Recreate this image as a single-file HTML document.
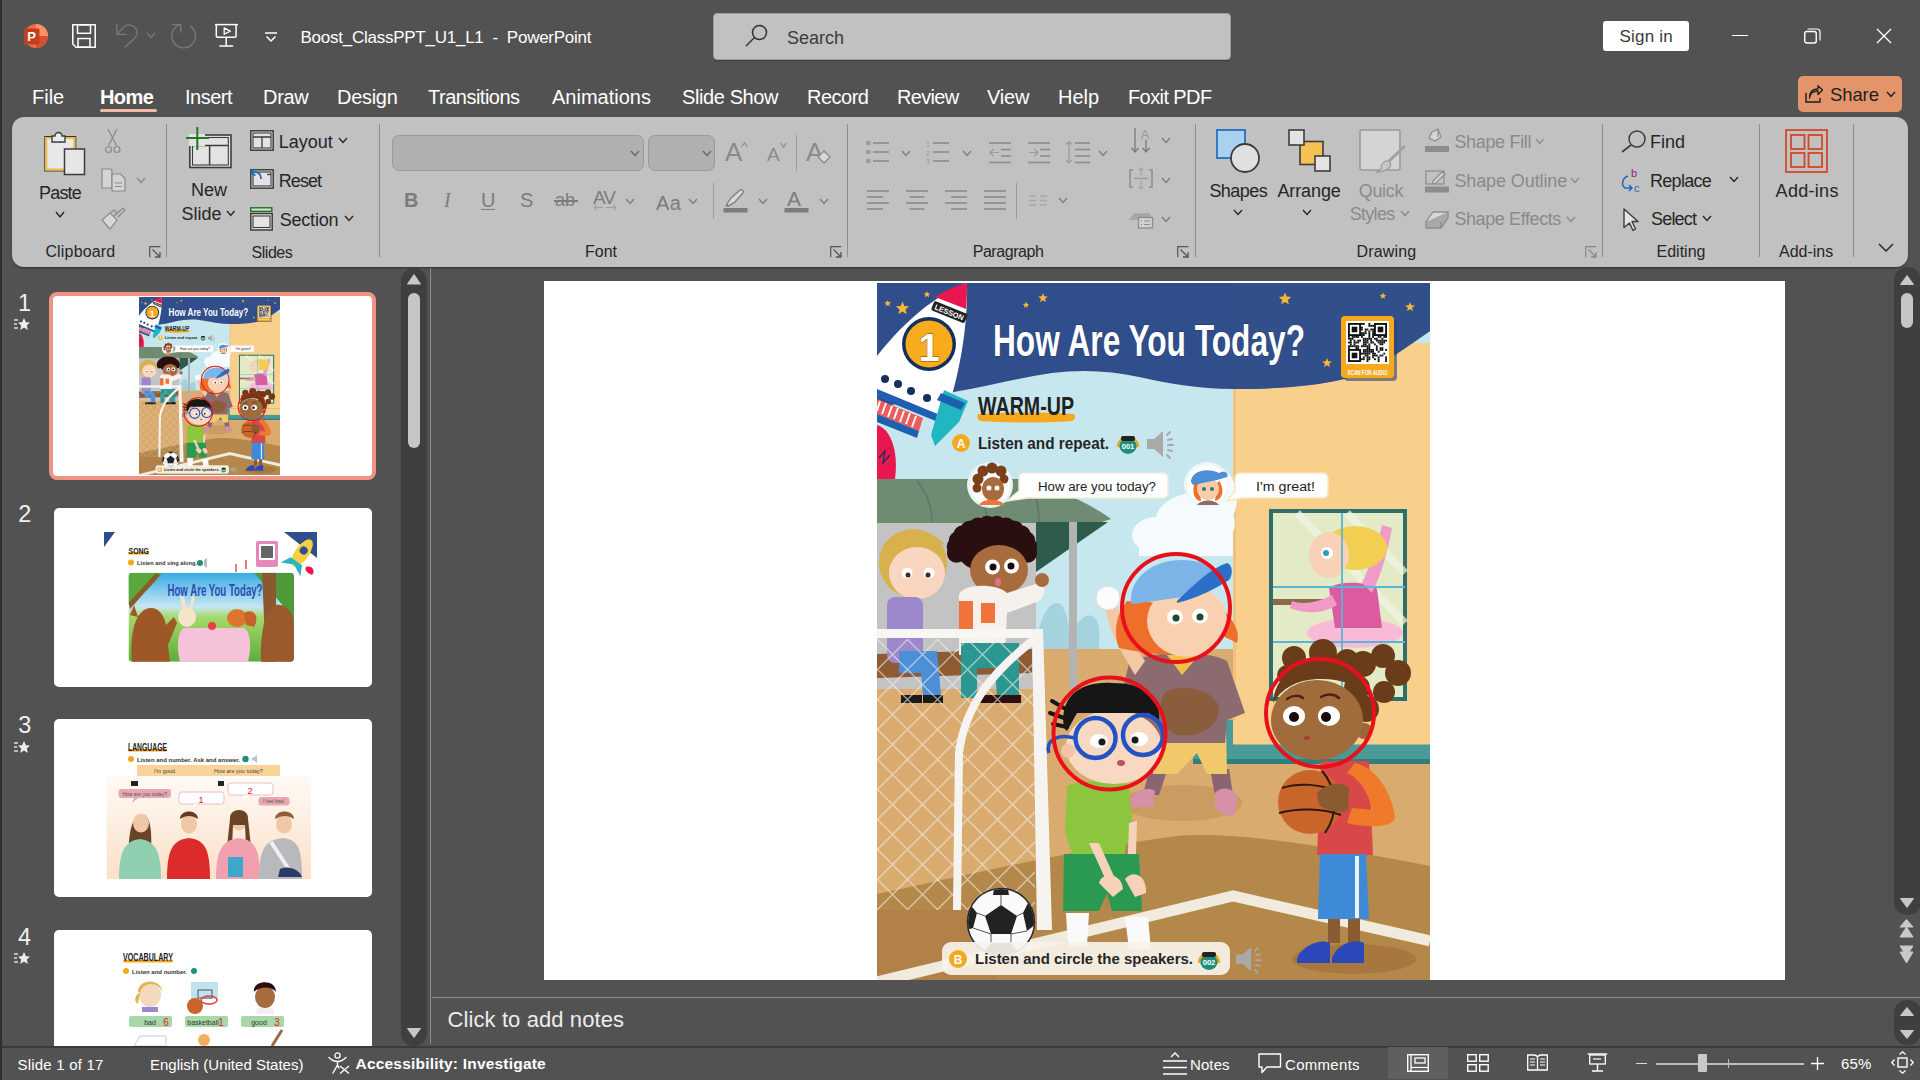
<!DOCTYPE html>
<html><head><meta charset="utf-8">
<style>
*{box-sizing:border-box;margin:0;padding:0}
html,body{width:1920px;height:1080px;overflow:hidden;background:#525252;font-family:"Liberation Sans",sans-serif}
.a{position:absolute;white-space:pre;line-height:1}
svg{position:absolute;overflow:visible}
</style></head><body>
<!-- chrome -->
<div class="a" style="left:0px;top:0px;width:2px;height:1080px;background:#2e2e2e;"></div>
<svg style="left:24px;top:24px;" width="24" height="24" viewBox="0 0 24 24"><circle cx="12" cy="12" r="12" fill="#ed6c47"/>
<path d="M12 0 A12 12 0 0 1 24 12 L12 12Z" fill="#ff8f6b"/>
<path d="M12 12 L24 12 A12 12 0 0 1 12 24Z" fill="#d35230"/>
<rect x="0" y="4.5" width="15.5" height="16" rx="1.5" fill="#c43e1c"/>
<text x="3.2" y="17" font-family="Liberation Sans" font-weight="bold" font-size="13" fill="#fff">P</text></svg>
<svg style="left:72px;top:24px;" width="24" height="24" viewBox="0 0 24 24"><path d="M0.8 0.8 H23.2 V23.2 H4 L0.8 20 Z" fill="none" stroke="#fff" stroke-width="1.5"/>
<rect x="5.5" y="0.8" width="13" height="8.5" fill="none" stroke="#fff" stroke-width="1.5"/>
<rect x="6" y="14.5" width="12" height="8.7" fill="none" stroke="#fff" stroke-width="1.5"/></svg>
<svg style="left:116px;top:24px;" width="24" height="24" viewBox="0 0 24 24"><path d="M0.8 0 V10.3 H10.7" fill="none" stroke="#7a7a7a" stroke-width="1.3"/>
<path d="M1.5 9.6 L8 3 C12 -1 21 1 21 9 C21 11.5 20 13 18 15 L8.7 23.2" fill="none" stroke="#7a7a7a" stroke-width="1.3"/></svg>
<svg style="left:146px;top:32px;" width="10" height="6.5" viewBox="0 0 10 6.5"><path d="M1 1 L5.0 5.5 L9 1" fill="none" stroke="#7a7a7a" stroke-width="1.2"/></svg>
<svg style="left:171px;top:23px;" width="26" height="26" viewBox="0 0 26 26"><path d="M1.3 1.6 H9.7 V9.8" fill="none" stroke="#7a7a7a" stroke-width="1.3"/>
<path d="M10.1 1.3 A11.9 11.9 0 1 0 19.1 2.9" fill="none" stroke="#7a7a7a" stroke-width="1.3"/></svg>
<svg style="left:214px;top:23px;" width="26" height="24" viewBox="0 0 26 24"><path d="M1 1.6 H24" stroke="#fff" stroke-width="1.5"/>
<path d="M2.3 1.6 V13 Q2.3 14.3 3.6 14.3 H20.8 Q22.1 14.3 22.1 13 V1.6" fill="none" stroke="#fff" stroke-width="1.5"/>
<path d="M10.2 4.9 L16.2 8.1 L10.2 11.3Z" fill="none" stroke="#fff" stroke-width="1.3" stroke-linejoin="round"/>
<path d="M12.2 14.3 V22.7 M5.3 22.9 H19.2" fill="none" stroke="#fff" stroke-width="1.5"/></svg>
<svg style="left:264px;top:32px;" width="14" height="11" viewBox="0 0 14 11"><path d="M1 1 H13" stroke="#fff" stroke-width="1.5"/><path d="M2.5 4.5 L7 9 L11.5 4.5" fill="none" stroke="#fff" stroke-width="1.5"/></svg>
<div class="a" style="left:300.5px;top:28.6px;font-size:17px;color:#ffffff;letter-spacing:-0.25px;">Boost_ClassPPT_U1_L1  -  PowerPoint</div>
<div class="a" style="left:713px;top:13px;width:518px;height:47px;background:#c1c1c1;border:1px solid #9c9c9c;border-radius:4px;box-shadow:0 1px 1px rgba(0,0,0,.25)"></div>
<svg style="left:745px;top:24px;" width="23" height="24" viewBox="0 0 23 24"><circle cx="14.5" cy="8.5" r="7" fill="none" stroke="#333" stroke-width="1.5"/>
<path d="M9.5 13.5 L1 22" stroke="#333" stroke-width="1.5"/></svg>
<div class="a" style="left:787px;top:29.2px;font-size:18px;color:#3b3b3b;">Search</div>
<div class="a" style="left:1603px;top:21px;width:86px;height:30px;background:#fff;border-radius:3px"></div>
<div class="a" style="left:1619.5px;top:28.3px;font-size:17px;color:#3a3a3a;letter-spacing:0.2px;">Sign in</div>
<div class="a" style="left:1732px;top:35px;width:16px;height:1.3px;background:#fff;"></div>
<svg style="left:1804px;top:28px;" width="17" height="16" viewBox="0 0 17 16"><rect x="0.75" y="3.5" width="11.5" height="11.5" rx="2" fill="none" stroke="#fff" stroke-width="1.4"/>
<path d="M3.5 1 H13 A3 3 0 0 1 16 4 V12.5" fill="none" stroke="#fff" stroke-width="1.2"/></svg>
<svg style="left:1876px;top:28px;" width="16" height="16" viewBox="0 0 16 16"><path d="M1 1 L15 15 M15 1 L1 15" stroke="#fff" stroke-width="1.4"/></svg>
<div class="a" style="left:32px;top:86.7px;font-size:20px;color:#ffffff;">File</div>
<div class="a" style="left:100px;top:86.7px;font-size:20px;color:#ffffff;font-weight:bold;letter-spacing:-0.6px;">Home</div>
<div class="a" style="left:185px;top:86.7px;font-size:20px;color:#ffffff;letter-spacing:-0.5px;">Insert</div>
<div class="a" style="left:263px;top:86.7px;font-size:20px;color:#ffffff;letter-spacing:-0.3px;">Draw</div>
<div class="a" style="left:337px;top:86.7px;font-size:20px;color:#ffffff;letter-spacing:-0.3px;">Design</div>
<div class="a" style="left:428px;top:86.7px;font-size:20px;color:#ffffff;letter-spacing:-0.5px;">Transitions</div>
<div class="a" style="left:552px;top:86.7px;font-size:20px;color:#ffffff;">Animations</div>
<div class="a" style="left:682px;top:86.7px;font-size:20px;color:#ffffff;letter-spacing:-0.4px;">Slide Show</div>
<div class="a" style="left:807px;top:86.7px;font-size:20px;color:#ffffff;letter-spacing:-0.5px;">Record</div>
<div class="a" style="left:897px;top:86.7px;font-size:20px;color:#ffffff;letter-spacing:-0.7px;">Review</div>
<div class="a" style="left:987px;top:86.7px;font-size:20px;color:#ffffff;letter-spacing:-0.2px;">View</div>
<div class="a" style="left:1058px;top:86.7px;font-size:20px;color:#ffffff;">Help</div>
<div class="a" style="left:1128px;top:86.7px;font-size:20px;color:#ffffff;letter-spacing:-0.6px;">Foxit PDF</div>
<div class="a" style="left:100px;top:108.5px;width:57px;height:3.5px;background:#f2b8a8;border-radius:2px"></div>
<div class="a" style="left:1798px;top:76px;width:104px;height:36px;background:#e3946a;border-radius:5px"></div>
<svg style="left:1805px;top:85px;" width="18" height="18" viewBox="0 0 18 18"><path d="M1 8 V17 H15 V13" fill="none" stroke="#1f1f1f" stroke-width="1.4"/>
<path d="M4.5 13 C5 8 8 6 13 6 V9.5 L17.5 5 L13 0.8 V4 C7 4 4 8 4.5 13Z" fill="none" stroke="#1f1f1f" stroke-width="1.3" stroke-linejoin="round"/></svg>
<div class="a" style="left:1830px;top:86.3px;font-size:18.5px;color:#1f1f1f;letter-spacing:-0.1px;">Share</div>
<svg style="left:1886px;top:91px;" width="10" height="6.5" viewBox="0 0 10 6.5"><path d="M1 1 L5.0 5.5 L9 1" fill="none" stroke="#1f1f1f" stroke-width="1.4"/></svg>
<!-- ribbon -->
<div class="a" style="left:12px;top:117px;width:1896px;height:150px;background:#c1c1c1;border-radius:12px;box-shadow:0 1px 2px rgba(0,0,0,.4)"></div>
<svg style="left:44px;top:130px;" width="42" height="46" viewBox="0 0 42 46"><rect x="0.8" y="6.5" width="31" height="34.5" fill="#e8e8e8" stroke="#333" stroke-width="1"/><rect x="2.3" y="8" width="28" height="31.5" fill="#e8e8e8" stroke="#f0bd45" stroke-width="2"/>
<path d="M8 12 V6 H11 A3.5 3.5 0 0 1 18 6 H21 V12 Z" fill="#ececec" stroke="#3c3c3c" stroke-width="1.4"/>
<rect x="20.5" y="19" width="20" height="25.5" fill="#e6e6e6" stroke="#3c3c3c" stroke-width="1.5"/></svg>
<div class="a" style="left:39px;top:183.7px;font-size:18px;color:#262626;letter-spacing:-0.8px;">Paste</div>
<svg style="left:55px;top:211px;" width="10" height="7" viewBox="0 0 10 7"><path d="M1 1 L5.0 6 L9 1" fill="none" stroke="#262626" stroke-width="1.4"/></svg>
<svg style="left:104px;top:129px;" width="18" height="25" viewBox="0 0 18 25"><path d="M4 0 L12.5 16.5 M13 0 L4.5 16.5" stroke="#8a8a8a" stroke-width="1.2" fill="none"/>
<circle cx="4.5" cy="20.5" r="3" fill="none" stroke="#8a8a8a" stroke-width="1.2"/><circle cx="13" cy="20.5" r="3" fill="none" stroke="#8a8a8a" stroke-width="1.2"/></svg>
<svg style="left:101px;top:168px;" width="25" height="24" viewBox="0 0 25 24"><path d="M1 1 H9.5 L11 2.5 V20 H1 Z" fill="#d4d4d4" stroke="#8a8a8a" stroke-width="1.2"/>
<path d="M11 6 H19.5 L24 10.5 V23 H11 Z" fill="#d4d4d4" stroke="#8a8a8a" stroke-width="1.2"/>
<path d="M14 15 H21 M14 18.5 H21" stroke="#8a8a8a" stroke-width="1.2"/></svg>
<svg style="left:136px;top:177px;" width="10" height="6.5" viewBox="0 0 10 6.5"><path d="M1 1 L5.0 5.5 L9 1" fill="none" stroke="#8a8a8a" stroke-width="1.3"/></svg>
<svg style="left:101px;top:207px;" width="25" height="23" viewBox="0 0 25 23"><path d="M1 13 L9 6 L16 13 L9 22 Z" fill="#d8d8d8" stroke="#8a8a8a" stroke-width="1.2"/>
<path d="M9 6 L13 3 L16 6 L13 9" fill="none" stroke="#8a8a8a" stroke-width="1.2"/>
<path d="M14 8 L22 1 L24 3 L17 10" fill="none" stroke="#8a8a8a" stroke-width="1.2"/></svg>
<div class="a" style="left:45.4px;top:244.4px;font-size:16px;color:#262626;letter-spacing:0.17px;">Clipboard</div>
<svg style="left:149px;top:246px;" width="12" height="12" viewBox="0 0 12 12"><path d="M0.7 11.3 V0.7 H11.3" fill="none" stroke="#555" stroke-width="1.2"/><path d="M3.5 3.5 L11 11 M6 11 H11 V6" fill="none" stroke="#555" stroke-width="1.3"/></svg>
<div class="a" style="left:166px;top:124px;width:1px;height:133px;background:#8e8e8e;"></div>
<svg style="left:185px;top:127px;" width="48" height="43" viewBox="0 0 48 43"><rect x="4.8" y="8" width="41.2" height="32.5" fill="#e3e3e3" stroke="#3c3c3c" stroke-width="1.6"/>
<rect x="7.5" y="10.5" width="35.8" height="27.5" fill="none" stroke="#3c3c3c" stroke-width="1.1"/>
<path d="M7.5 18.5 H43 M24.6 18.5 V38" stroke="#3c3c3c" stroke-width="1.5"/>
<rect x="4" y="7" width="16" height="12" fill="#e3e3e3"/>
<path d="M12.3 0 V23 M1 11 H24" stroke="#1e7b1e" stroke-width="2"/></svg>
<div class="a" style="left:191px;top:181.4px;font-size:18px;color:#262626;">New</div>
<div class="a" style="left:181.5px;top:205.1px;font-size:18px;color:#262626;">Slide</div>
<svg style="left:226px;top:210px;" width="9.5" height="6.5" viewBox="0 0 9.5 6.5"><path d="M1 1 L4.75 5.5 L8.5 1" fill="none" stroke="#262626" stroke-width="1.4"/></svg>
<svg style="left:250px;top:130px;" width="24" height="21" viewBox="0 0 24 21"><rect x="0.8" y="0.8" width="22.4" height="19.4" fill="#e3e3e3" stroke="#3c3c3c" stroke-width="1.5"/>
<rect x="3" y="3" width="18" height="15" fill="none" stroke="#3c3c3c" stroke-width="1.1"/><path d="M3 7 H21 M12 7 V18" stroke="#3c3c3c" stroke-width="1.3"/></svg>
<div class="a" style="left:278.7px;top:132.5px;font-size:18px;color:#262626;">Layout</div>
<svg style="left:338px;top:137px;" width="10" height="6.5" viewBox="0 0 10 6.5"><path d="M1 1 L5.0 5.5 L9 1" fill="none" stroke="#262626" stroke-width="1.4"/></svg>
<svg style="left:250px;top:168px;" width="24" height="21" viewBox="0 0 24 21"><rect x="0.8" y="1.8" width="22.4" height="18.4" fill="#e3e3e3" stroke="#3c3c3c" stroke-width="1.5"/>
<rect x="3" y="4" width="18" height="14" fill="none" stroke="#3c3c3c" stroke-width="1.1"/><path d="M17 6.5 H21" stroke="#3c3c3c" stroke-width="1.3"/>
<path d="M1 5 L4.5 1 M1 5 L5.5 7.5 M1.5 5 C7 3 11 5 11 11" fill="none" stroke="#1f66c0" stroke-width="1.6"/></svg>
<div class="a" style="left:278.7px;top:171.7px;font-size:18px;color:#262626;letter-spacing:-0.9px;">Reset</div>
<svg style="left:250px;top:207px;" width="23" height="24" viewBox="0 0 23 24"><rect x="0.8" y="0.8" width="21" height="3.5" fill="#e3e3e3" stroke="#1e7b1e" stroke-width="1.5"/>
<rect x="0.8" y="6.5" width="21.4" height="16.5" fill="#e3e3e3" stroke="#3c3c3c" stroke-width="1.5"/>
<rect x="3" y="9" width="17" height="11.5" fill="none" stroke="#3c3c3c" stroke-width="1.1"/></svg>
<div class="a" style="left:279.7px;top:210.5px;font-size:18px;color:#262626;letter-spacing:-0.2px;">Section</div>
<svg style="left:344px;top:215px;" width="10" height="6.5" viewBox="0 0 10 6.5"><path d="M1 1 L5.0 5.5 L9 1" fill="none" stroke="#262626" stroke-width="1.4"/></svg>
<div class="a" style="left:251.6px;top:245.2px;font-size:16px;color:#262626;letter-spacing:-0.5px;">Slides</div>
<div class="a" style="left:379px;top:124px;width:1px;height:133px;background:#8e8e8e;"></div>
<div class="a" style="left:392px;top:135px;width:252px;height:36px;background:#b0b0b0;border:1px solid #9a9a9a;border-radius:7px"></div>
<svg style="left:630px;top:150px;" width="10" height="6.5" viewBox="0 0 10 6.5"><path d="M1 1 L5.0 5.5 L9 1" fill="none" stroke="#666" stroke-width="1.3"/></svg>
<div class="a" style="left:647.5px;top:135px;width:67px;height:36px;background:#b0b0b0;border:1px solid #9a9a9a;border-radius:7px"></div>
<svg style="left:701.5px;top:150px;" width="10" height="6.5" viewBox="0 0 10 6.5"><path d="M1 1 L5.0 5.5 L9 1" fill="none" stroke="#666" stroke-width="1.3"/></svg>
<svg style="left:725px;top:140px;" width="24" height="22" viewBox="0 0 24 22"><text x="0" y="21" font-family="Liberation Sans" font-size="26" fill="#8a8a8a">A</text><path d="M16.5 7 L19.5 3 L22.5 7" fill="none" stroke="#8a8a8a" stroke-width="1.1"/></svg>
<svg style="left:767px;top:140px;" width="22" height="22" viewBox="0 0 22 22"><text x="0" y="21" font-family="Liberation Sans" font-size="19" fill="#8a8a8a">A</text><path d="M13.5 3 L16.5 7 L19.5 3" fill="none" stroke="#8a8a8a" stroke-width="1.1"/></svg>
<div class="a" style="left:796px;top:135px;width:1px;height:36px;background:#9a9a9a;"></div>
<svg style="left:806px;top:140px;" width="26" height="25" viewBox="0 0 26 25"><text x="0" y="21" font-family="Liberation Sans" font-size="26" fill="#8a8a8a">A</text><path d="M12 17 L18 11 L24 17 L18 23 Z" fill="#d8d8d8" stroke="#8a8a8a" stroke-width="1.3"/></svg>
<div class="a" style="left:404px;top:189.5px;font-size:20px;color:#7c7c7c;font-weight:bold;">B</div>
<div class="a" style="left:444px;top:189.5px;font-size:20px;color:#7c7c7c;font-family:Liberation Serif;font-style:italic">I</div>
<div class="a" style="left:481px;top:189.5px;font-size:20px;color:#7c7c7c;">U</div>
<div class="a" style="left:481px;top:208.5px;width:14px;height:1.5px;background:#7c7c7c;"></div>
<div class="a" style="left:520px;top:189.5px;font-size:20px;color:#7c7c7c;">S</div>
<div class="a" style="left:555px;top:191.2px;font-size:18px;color:#7c7c7c;">ab</div>
<div class="a" style="left:554px;top:200px;width:24px;height:1.5px;background:#7c7c7c;"></div>
<div class="a" style="left:593px;top:187.8px;font-size:19px;color:#7c7c7c;letter-spacing:-1px;">AV</div>
<svg style="left:593px;top:204px;" width="24" height="7" viewBox="0 0 24 7"><path d="M1 3.5 H10 M1 3.5 L3.5 1 M1 3.5 L3.5 6 M13 3.5 H23 M23 3.5 L20.5 1 M23 3.5 L20.5 6" fill="none" stroke="#a0a0a0" stroke-width="1.1"/></svg>
<svg style="left:625px;top:198px;" width="10" height="6.5" viewBox="0 0 10 6.5"><path d="M1 1 L5.0 5.5 L9 1" fill="none" stroke="#7c7c7c" stroke-width="1.3"/></svg>
<div class="a" style="left:656px;top:192.5px;font-size:20px;color:#7c7c7c;letter-spacing:0.5px;">Aa</div>
<svg style="left:688px;top:198px;" width="10" height="6.5" viewBox="0 0 10 6.5"><path d="M1 1 L5.0 5.5 L9 1" fill="none" stroke="#7c7c7c" stroke-width="1.3"/></svg>
<div class="a" style="left:713px;top:183px;width:1px;height:36px;background:#9a9a9a;"></div>
<svg style="left:723px;top:189px;" width="25" height="24" viewBox="0 0 25 24"><path d="M4 15 L8 9 L17 1 C19 0 21 2 20 4 L12 13 L5 17Z" fill="#d8d8d8" stroke="#7c7c7c" stroke-width="1.3"/>
<path d="M2 16.5 L5 15 L4 18 Z" fill="#7c7c7c"/><rect x="0.5" y="19" width="24" height="4.5" fill="#7c7c7c"/></svg>
<svg style="left:758px;top:198px;" width="10" height="6.5" viewBox="0 0 10 6.5"><path d="M1 1 L5.0 5.5 L9 1" fill="none" stroke="#7c7c7c" stroke-width="1.3"/></svg>
<svg style="left:784px;top:189px;" width="25" height="24" viewBox="0 0 25 24"><text x="3" y="17" font-family="Liberation Sans" font-size="21" fill="#7c7c7c">A</text><rect x="0.5" y="19" width="24" height="4.5" fill="#7c7c7c"/></svg>
<svg style="left:819px;top:198px;" width="10" height="6.5" viewBox="0 0 10 6.5"><path d="M1 1 L5.0 5.5 L9 1" fill="none" stroke="#7c7c7c" stroke-width="1.3"/></svg>
<div class="a" style="left:585px;top:244.4px;font-size:16px;color:#262626;">Font</div>
<svg style="left:830px;top:246px;" width="12" height="12" viewBox="0 0 12 12"><path d="M0.7 11.3 V0.7 H11.3" fill="none" stroke="#555" stroke-width="1.2"/><path d="M3.5 3.5 L11 11 M6 11 H11 V6" fill="none" stroke="#555" stroke-width="1.3"/></svg>
<div class="a" style="left:847px;top:124px;width:1px;height:133px;background:#8e8e8e;"></div>
<svg style="left:866px;top:141px;" width="24" height="22" viewBox="0 0 24 22"><rect x="0" y="0" width="4.5" height="4" fill="#9a9a9a"/><rect x="0" y="9" width="4.5" height="4" fill="#9a9a9a"/><rect x="0" y="18" width="4.5" height="4" fill="#9a9a9a"/><path d="M7 2 H23" stroke="#8c8c8c" stroke-width="1.6"/><path d="M7 11 H23" stroke="#8c8c8c" stroke-width="1.6"/><path d="M7 20 H23" stroke="#8c8c8c" stroke-width="1.6"/></svg>
<svg style="left:901px;top:150px;" width="10" height="6.5" viewBox="0 0 10 6.5"><path d="M1 1 L5.0 5.5 L9 1" fill="none" stroke="#7c7c7c" stroke-width="1.3"/></svg>
<svg style="left:926px;top:141px;" width="24" height="23" viewBox="0 0 24 23"><text x="0" y="6" font-family="Liberation Sans" font-size="7" fill="#9a9a9a">1</text><text x="0" y="15" font-family="Liberation Sans" font-size="7" fill="#9a9a9a">2</text><text x="0" y="23" font-family="Liberation Sans" font-size="7" fill="#9a9a9a">3</text><path d="M7 2 H23" stroke="#8c8c8c" stroke-width="1.6"/><path d="M7 11 H23" stroke="#8c8c8c" stroke-width="1.6"/><path d="M7 20 H23" stroke="#8c8c8c" stroke-width="1.6"/></svg>
<svg style="left:962px;top:150px;" width="10" height="6.5" viewBox="0 0 10 6.5"><path d="M1 1 L5.0 5.5 L9 1" fill="none" stroke="#7c7c7c" stroke-width="1.3"/></svg>
<svg style="left:989px;top:142px;" width="23" height="21" viewBox="0 0 23 21"><path d="M0 1.0 H22" stroke="#8c8c8c" stroke-width="1.6"/><path d="M12 7.5 H22" stroke="#8c8c8c" stroke-width="1.6"/><path d="M12 14.0 H22" stroke="#8c8c8c" stroke-width="1.6"/><path d="M0 20.5 H22" stroke="#8c8c8c" stroke-width="1.6"/><path d="M10 10.5 H1 M4.5 7 L1 10.5 L4.5 14" fill="none" stroke="#9a9a9a" stroke-width="1.2"/></svg>
<svg style="left:1028px;top:142px;" width="23" height="21" viewBox="0 0 23 21"><path d="M0 1.0 H22" stroke="#8c8c8c" stroke-width="1.6"/><path d="M12 7.5 H22" stroke="#8c8c8c" stroke-width="1.6"/><path d="M12 14.0 H22" stroke="#8c8c8c" stroke-width="1.6"/><path d="M0 20.5 H22" stroke="#8c8c8c" stroke-width="1.6"/><path d="M1 10.5 H10 M6.5 7 L10 10.5 L6.5 14" fill="none" stroke="#9a9a9a" stroke-width="1.2"/></svg>
<svg style="left:1065px;top:141px;" width="26" height="23" viewBox="0 0 26 23"><path d="M10 2.0 H25" stroke="#8c8c8c" stroke-width="1.6"/><path d="M10 8.5 H25" stroke="#8c8c8c" stroke-width="1.6"/><path d="M10 15.0 H25" stroke="#8c8c8c" stroke-width="1.6"/><path d="M10 21.5 H25" stroke="#8c8c8c" stroke-width="1.6"/><path d="M4 0.5 V22 M1 3.5 L4 0.5 L7 3.5 M1 19 L4 22 L7 19" fill="none" stroke="#9a9a9a" stroke-width="1.2"/></svg>
<svg style="left:1098px;top:150px;" width="10" height="6.5" viewBox="0 0 10 6.5"><path d="M1 1 L5.0 5.5 L9 1" fill="none" stroke="#7c7c7c" stroke-width="1.3"/></svg>
<svg style="left:1131px;top:128px;" width="21" height="26" viewBox="0 0 21 26"><path d="M4 0 V24 M0.5 20 L4 24 L7.5 20 M15 12 V24 M11.5 20 L15 24 L18.5 20" fill="none" stroke="#7c7c7c" stroke-width="1.4"/><text x="10" y="11" font-family="Liberation Sans" font-size="12" fill="#9a9a9a">A</text></svg>
<svg style="left:1161px;top:137px;" width="10" height="6.5" viewBox="0 0 10 6.5"><path d="M1 1 L5.0 5.5 L9 1" fill="none" stroke="#7c7c7c" stroke-width="1.3"/></svg>
<svg style="left:1129px;top:167px;" width="24" height="24" viewBox="0 0 24 24"><path d="M4 3 H1 V20 H4 M20 3 H23 V20 H20" fill="none" stroke="#8c8c8c" stroke-width="1.5"/><path d="M5 11.5 H19" stroke="#9a9a9a" stroke-width="1.4"/><path d="M12 1 V9 M9.5 3.5 L12 1 L14.5 3.5 M12 14 V22 M9.5 19.5 L12 22 L14.5 19.5" fill="none" stroke="#a8a8a8" stroke-width="1.3"/></svg>
<svg style="left:1161px;top:177px;" width="10" height="6.5" viewBox="0 0 10 6.5"><path d="M1 1 L5.0 5.5 L9 1" fill="none" stroke="#7c7c7c" stroke-width="1.3"/></svg>
<svg style="left:1129px;top:209px;" width="24" height="20" viewBox="0 0 24 20"><path d="M0.5 11 L5 5 H20 L24 11" fill="#a8a8a8" stroke="#9a9a9a" stroke-width="1"/><rect x="9.5" y="8.5" width="14" height="10.5" fill="#d2d2d2" stroke="#8c8c8c" stroke-width="1.3"/><path d="M12 12 H13 M15 12 H21 M12 15.5 H13 M15 15.5 H21" stroke="#8c8c8c" stroke-width="1.2"/></svg>
<svg style="left:1161px;top:216px;" width="10" height="6.5" viewBox="0 0 10 6.5"><path d="M1 1 L5.0 5.5 L9 1" fill="none" stroke="#7c7c7c" stroke-width="1.3"/></svg>
<svg style="left:867px;top:190px;" width="23" height="21" viewBox="0 0 23 21"><path d="M0 1 H22" stroke="#8c8c8c" stroke-width="1.6"/><path d="M0 7 H16" stroke="#8c8c8c" stroke-width="1.6"/><path d="M0 13 H22" stroke="#8c8c8c" stroke-width="1.6"/><path d="M0 19 H16" stroke="#8c8c8c" stroke-width="1.6"/></svg>
<svg style="left:906px;top:190px;" width="23" height="21" viewBox="0 0 23 21"><path d="M0 1 H22" stroke="#8c8c8c" stroke-width="1.6"/><path d="M3.5 7 H18.5" stroke="#8c8c8c" stroke-width="1.6"/><path d="M0 13 H22" stroke="#8c8c8c" stroke-width="1.6"/><path d="M3.5 19 H18.5" stroke="#8c8c8c" stroke-width="1.6"/></svg>
<svg style="left:945px;top:190px;" width="23" height="21" viewBox="0 0 23 21"><path d="M0 1 H22" stroke="#8c8c8c" stroke-width="1.6"/><path d="M6 7 H22" stroke="#8c8c8c" stroke-width="1.6"/><path d="M0 13 H22" stroke="#8c8c8c" stroke-width="1.6"/><path d="M6 19 H22" stroke="#8c8c8c" stroke-width="1.6"/></svg>
<svg style="left:984px;top:190px;" width="23" height="21" viewBox="0 0 23 21"><path d="M0 1 H22" stroke="#8c8c8c" stroke-width="1.6"/><path d="M0 7 H22" stroke="#8c8c8c" stroke-width="1.6"/><path d="M0 13 H22" stroke="#8c8c8c" stroke-width="1.6"/><path d="M0 19 H22" stroke="#8c8c8c" stroke-width="1.6"/></svg>
<div class="a" style="left:1016px;top:183px;width:1px;height:36px;background:#9a9a9a;"></div>
<svg style="left:1029px;top:195px;" width="20" height="12" viewBox="0 0 20 12"><path d="M0 1 H7 M11 1 H18 M0 5.5 H7 M11 5.5 H18 M0 10 H7 M11 10 H18" stroke="#a8a8a8" stroke-width="1.5"/></svg>
<svg style="left:1058px;top:197px;" width="10" height="6.5" viewBox="0 0 10 6.5"><path d="M1 1 L5.0 5.5 L9 1" fill="none" stroke="#7c7c7c" stroke-width="1.3"/></svg>
<div class="a" style="left:972.7px;top:244.4px;font-size:16px;color:#262626;letter-spacing:-0.45px;">Paragraph</div>
<svg style="left:1177px;top:246px;" width="12" height="12" viewBox="0 0 12 12"><path d="M0.7 11.3 V0.7 H11.3" fill="none" stroke="#555" stroke-width="1.2"/><path d="M3.5 3.5 L11 11 M6 11 H11 V6" fill="none" stroke="#555" stroke-width="1.3"/></svg>
<div class="a" style="left:1194.5px;top:124px;width:1px;height:133px;background:#8e8e8e;"></div>
<svg style="left:1216px;top:129px;" width="45" height="44" viewBox="0 0 45 44"><rect x="1" y="1" width="28" height="28" fill="#a9d2f0" stroke="#2a6fc0" stroke-width="1.8"/>
<circle cx="29" cy="29" r="14" fill="#e0e0e0" stroke="#3c3c3c" stroke-width="1.8"/></svg>
<div class="a" style="left:1209.4px;top:181.6px;font-size:18px;color:#262626;letter-spacing:-0.55px;">Shapes</div>
<svg style="left:1233px;top:209px;" width="10" height="6.5" viewBox="0 0 10 6.5"><path d="M1 1 L5.0 5.5 L9 1" fill="none" stroke="#262626" stroke-width="1.4"/></svg>
<svg style="left:1288px;top:129px;" width="43" height="44" viewBox="0 0 43 44"><rect x="12" y="12.5" width="23" height="23" fill="#f4c152" stroke="#3c3c3c" stroke-width="1.6"/>
<rect x="1" y="1" width="15" height="15" fill="#e3e3e3" stroke="#3c3c3c" stroke-width="1.6"/>
<rect x="27" y="27" width="15" height="15" fill="#e3e3e3" stroke="#3c3c3c" stroke-width="1.6"/></svg>
<div class="a" style="left:1277.4px;top:181.6px;font-size:18px;color:#262626;letter-spacing:-0.1px;">Arrange</div>
<svg style="left:1302px;top:209px;" width="10" height="6.5" viewBox="0 0 10 6.5"><path d="M1 1 L5.0 5.5 L9 1" fill="none" stroke="#262626" stroke-width="1.4"/></svg>
<svg style="left:1359px;top:129px;" width="48" height="46" viewBox="0 0 48 46"><rect x="1" y="1" width="40" height="40" rx="2" fill="#d4d4d4" stroke="#9a9a9a" stroke-width="1.6"/>
<path d="M46 17 L30 32" stroke="#a0a0a0" stroke-width="3"/><path d="M22 40 C22 34 27 30 31 33 C33 37 29 43 17 43 C20 42 21 41 22 40Z" fill="#c8c8c8" stroke="#9a9a9a" stroke-width="1.2"/></svg>
<div class="a" style="left:1358.7px;top:181.6px;font-size:18px;color:#8a8a8a;letter-spacing:-0.3px;">Quick</div>
<div class="a" style="left:1349.7px;top:205.0px;font-size:18px;color:#8a8a8a;letter-spacing:-0.7px;">Styles</div>
<svg style="left:1400px;top:210px;" width="10" height="6.5" viewBox="0 0 10 6.5"><path d="M1 1 L5.0 5.5 L9 1" fill="none" stroke="#8a8a8a" stroke-width="1.3"/></svg>
<svg style="left:1425px;top:129px;" width="24" height="25" viewBox="0 0 24 25"><path d="M7 3 L13 0 L16 8 L10 12 L4 9Z" fill="#d4d4d4" stroke="#8c8c8c" stroke-width="1.2"/><path d="M13 1 V8" stroke="#8c8c8c" stroke-width="1.2"/><rect x="0" y="17" width="24" height="6" fill="#8c8c8c"/></svg>
<div class="a" style="left:1454.4px;top:132.7px;font-size:18px;color:#8a8a8a;letter-spacing:-0.33px;">Shape Fill</div>
<svg style="left:1535px;top:138px;" width="9.5" height="6.5" viewBox="0 0 9.5 6.5"><path d="M1 1 L4.75 5.5 L8.5 1" fill="none" stroke="#8a8a8a" stroke-width="1.3"/></svg>
<svg style="left:1425px;top:170px;" width="24" height="23" viewBox="0 0 24 23"><rect x="1" y="1" width="18" height="13" fill="none" stroke="#8c8c8c" stroke-width="1.2"/><path d="M8 11 L17 2 L20 4 L11 13 L7.5 13.5Z" fill="#d4d4d4" stroke="#8c8c8c" stroke-width="1.2"/><rect x="0" y="16.5" width="24" height="6" fill="#8c8c8c"/></svg>
<div class="a" style="left:1454.4px;top:171.7px;font-size:18px;color:#8a8a8a;letter-spacing:-0.1px;">Shape Outline</div>
<svg style="left:1570px;top:177px;" width="10" height="6.5" viewBox="0 0 10 6.5"><path d="M1 1 L5.0 5.5 L9 1" fill="none" stroke="#8a8a8a" stroke-width="1.3"/></svg>
<svg style="left:1425px;top:209px;" width="24" height="21" viewBox="0 0 24 21"><path d="M1 13 L8 3 H23 L16 13Z" fill="#d8d8d8" stroke="#8c8c8c" stroke-width="1.3"/><path d="M1 13 V19 H16 L23 9 V3 M16 13 V19" fill="#a8a8a8" stroke="#8c8c8c" stroke-width="1.3"/></svg>
<div class="a" style="left:1454.4px;top:210.3px;font-size:18px;color:#8a8a8a;letter-spacing:-0.4px;">Shape Effects</div>
<svg style="left:1566px;top:216px;" width="10" height="6.5" viewBox="0 0 10 6.5"><path d="M1 1 L5.0 5.5 L9 1" fill="none" stroke="#8a8a8a" stroke-width="1.3"/></svg>
<div class="a" style="left:1356.6px;top:244.4px;font-size:16px;color:#262626;letter-spacing:0.15px;">Drawing</div>
<svg style="left:1585px;top:246px;" width="12" height="12" viewBox="0 0 12 12"><path d="M0.7 11.3 V0.7 H11.3" fill="none" stroke="#888" stroke-width="1.2"/><path d="M3.5 3.5 L11 11 M6 11 H11 V6" fill="none" stroke="#888" stroke-width="1.3"/></svg>
<div class="a" style="left:1602px;top:124px;width:1px;height:133px;background:#8e8e8e;"></div>
<svg style="left:1621px;top:130px;" width="26" height="23" viewBox="0 0 26 23"><circle cx="16" cy="9" r="8" fill="none" stroke="#3c3c3c" stroke-width="1.5"/><path d="M10 15 L1 22" stroke="#3c3c3c" stroke-width="1.6"/></svg>
<div class="a" style="left:1650px;top:132.7px;font-size:18px;color:#262626;">Find</div>
<svg style="left:1620px;top:168px;" width="24" height="25" viewBox="0 0 24 25"><text x="11" y="9" font-family="Liberation Sans" font-size="11" fill="#a0107a">b</text><text x="14" y="24" font-family="Liberation Sans" font-size="11" fill="#1f66c0">c</text><path d="M8 8 C2 10 1 17 5 20 H12 M9 17 L12 20 L9 23" fill="none" stroke="#1f66c0" stroke-width="1.5"/></svg>
<div class="a" style="left:1650px;top:171.7px;font-size:18px;color:#262626;letter-spacing:-0.7px;">Replace</div>
<svg style="left:1729px;top:176px;" width="10" height="6.5" viewBox="0 0 10 6.5"><path d="M1 1 L5.0 5.5 L9 1" fill="none" stroke="#262626" stroke-width="1.4"/></svg>
<svg style="left:1623px;top:208px;" width="17" height="24" viewBox="0 0 17 24"><path d="M1 1 L15 13.5 H9 L12.5 21 L10 22.5 L6.5 15 L1 19.5Z" fill="#e3e3e3" stroke="#3c3c3c" stroke-width="1.4" stroke-linejoin="round"/></svg>
<div class="a" style="left:1651px;top:210.3px;font-size:18px;color:#262626;letter-spacing:-0.8px;">Select</div>
<svg style="left:1702px;top:215px;" width="10" height="6.5" viewBox="0 0 10 6.5"><path d="M1 1 L5.0 5.5 L9 1" fill="none" stroke="#262626" stroke-width="1.4"/></svg>
<div class="a" style="left:1656.5px;top:244.4px;font-size:16px;color:#262626;">Editing</div>
<div class="a" style="left:1758.5px;top:124px;width:1px;height:133px;background:#8e8e8e;"></div>
<svg style="left:1785px;top:129px;" width="43" height="44" viewBox="0 0 43 44"><rect x="1" y="1" width="41" height="42" fill="none" stroke="#d24726" stroke-width="1.8"/>
<rect x="6" y="6" width="13.5" height="14" fill="none" stroke="#d24726" stroke-width="1.8"/><rect x="23.5" y="6" width="13.5" height="14" fill="none" stroke="#d24726" stroke-width="1.8"/>
<rect x="6" y="24" width="13.5" height="14" fill="none" stroke="#d24726" stroke-width="1.8"/><rect x="23.5" y="24" width="13.5" height="14" fill="none" stroke="#d24726" stroke-width="1.8"/></svg>
<div class="a" style="left:1775.6px;top:181.6px;font-size:18px;color:#262626;letter-spacing:0.3px;">Add-ins</div>
<div class="a" style="left:1779px;top:244.4px;font-size:16px;color:#262626;">Add-ins</div>
<div class="a" style="left:1853px;top:124px;width:1px;height:133px;background:#8e8e8e;"></div>
<svg style="left:1878px;top:242.5px;" width="16" height="9" viewBox="0 0 16 9"><path d="M1 1 L8.0 8 L15 1" fill="none" stroke="#262626" stroke-width="1.5"/></svg>
<!-- panel -->
<div class="a" style="left:18px;top:291.8px;font-size:23.5px;color:#f0f0f0;">1</div>
<svg style="left:14px;top:318px;" width="16" height="13" viewBox="0 0 16 13"><path d="M0 2 H4 M0 6 H3 M0 10 H4" stroke="#ddd" stroke-width="1.3"/><polygon points="10,0 11.9,4.3 16,4.6 12.8,7.5 13.8,12 10,9.6 6.2,12 7.2,7.5 4,4.6 8.1,4.3" fill="#eee"/></svg>
<div class="a" style="left:18.3px;top:502.5px;font-size:23.5px;color:#f0f0f0;">2</div>
<div class="a" style="left:18.3px;top:714.0px;font-size:23.5px;color:#f0f0f0;">3</div>
<svg style="left:14px;top:741px;" width="16" height="13" viewBox="0 0 16 13"><path d="M0 2 H4 M0 6 H3 M0 10 H4" stroke="#ddd" stroke-width="1.3"/><polygon points="10,0 11.9,4.3 16,4.6 12.8,7.5 13.8,12 10,9.6 6.2,12 7.2,7.5 4,4.6 8.1,4.3" fill="#eee"/></svg>
<div class="a" style="left:18px;top:926.0px;font-size:23.5px;color:#f0f0f0;">4</div>
<svg style="left:14px;top:952px;" width="16" height="13" viewBox="0 0 16 13"><path d="M0 2 H4 M0 6 H3 M0 10 H4" stroke="#ddd" stroke-width="1.3"/><polygon points="10,0 11.9,4.3 16,4.6 12.8,7.5 13.8,12 10,9.6 6.2,12 7.2,7.5 4,4.6 8.1,4.3" fill="#eee"/></svg>
<div class="a" style="left:49px;top:292px;width:327px;height:188px;background:#fff;border:4.5px solid #ef9484;border-radius:8px"></div>
<svg style="left:138.7px;top:296.8px" width="141" height="178" viewBox="0 0 553 697" preserveAspectRatio="none"><use href="#illus"/></svg>
<div class="a" style="left:54px;top:507.5px;width:317.5px;height:179px;background:#fff;border-radius:5px"></div>
<svg style="left:54px;top:505px;" width="318" height="181" viewBox="0 0 318 181"><path d="M50 27 H61 L50 42Z" fill="#2f4e8b"/>
<path d="M230 27 H263 V53Z" fill="#2f4e8b"/>
<g transform="rotate(35 248 48)"><ellipse cx="248" cy="48" rx="7" ry="16" fill="#f5d040"/><circle cx="248" cy="45" r="4" fill="#2f4e8b"/><path d="M241 58 L236 68 L248 62 L260 68 L255 58Z" fill="#2ab5c5"/></g>
<path d="M252 62 C258 60 262 66 258 70 C254 68 250 66 252 62Z" fill="#e8174f"/>
<rect x="74" y="47" width="21" height="2.5" rx="1" fill="#f5a81c"/><text x="74.5" y="48.5" font-family="Liberation Sans" font-weight="bold" font-size="9.5" fill="#222" textLength="20.5" lengthAdjust="spacingAndGlyphs">SONG</text>
<circle cx="77" cy="57.5" r="3" fill="#f5a81c"/><text x="83" y="60" font-family="Liberation Sans" font-weight="bold" font-size="6" fill="#333" textLength="60" lengthAdjust="spacingAndGlyphs">Listen and sing along.</text>
<circle cx="146" cy="58" r="3" fill="#1f8f7c"/><path d="M150 55 L153 53 V63 L150 61Z" fill="#bbb"/>
<rect x="202" y="36" width="22" height="26" rx="2" fill="#e58ab8"/><rect x="205" y="39" width="16" height="16" fill="#fff"/><rect x="207" y="41" width="12" height="12" fill="#333" opacity=".75"/>
<path d="M182 59 V67 M192 55 V64" stroke="#e04a4a" stroke-width="1.5"/>
<defs><linearGradient id="sk2" x1="0" y1="0" x2="0" y2="1"><stop offset="0" stop-color="#36abe6"/><stop offset=".38" stop-color="#c6e6f4"/><stop offset=".5" stop-color="#a6d86a"/><stop offset="1" stop-color="#5cae3c"/></linearGradient>
<clipPath id="c2"><rect x="74.5" y="67.7" width="165.5" height="89" rx="4"/></clipPath></defs>
<g clip-path="url(#c2)">
<rect x="74.5" y="67.7" width="165.5" height="89" fill="url(#sk2)"/>
<path d="M74.5 67.7 H108 C100 80 88 90 74.5 98Z" fill="#5aa83a"/><path d="M74.5 98 L102 68 L106 70 L76 104Z" fill="#8a5a2a"/>
<path d="M200 67.7 H240 V120 C232 100 215 85 200 67.7Z" fill="#4e9a3a"/><path d="M208 67.7 H222 V157 H212Z" fill="#8a5a2e"/>
<path d="M78 157 C76 130 80 110 92 104 C102 100 110 108 112 120 L120 112 L123 118 L114 140 L116 157Z" fill="#9e5828"/><path d="M76 110 L80 100 L84 112Z" fill="#9e5828"/>
<path d="M207 157 C206 130 210 105 222 100 C232 98 240 108 240 120 V157Z" fill="#9a5a2c"/>
<path d="M126 157 C122 140 124 126 130 123 H190 C196 126 198 140 194 157Z" fill="#f6c2da"/>
<ellipse cx="133" cy="112" rx="9" ry="10" fill="#f3e4ca"/><path d="M128 102 L126 90 L130 92 L133 103Z M136 102 L138 90 L141 93 L138 103Z" fill="#f3e4ca"/>
<ellipse cx="183" cy="113" rx="10" ry="9" fill="#dd7430"/><path d="M190 108 C200 102 206 112 200 122 L192 120Z" fill="#c8622a"/>
<circle cx="158" cy="121" r="4" fill="#e8404a"/>
<text x="161" y="91" font-family="Liberation Sans" font-weight="bold" font-size="16" fill="#2c4bb0" text-anchor="middle" textLength="95" lengthAdjust="spacingAndGlyphs">How Are You Today?</text>
</g></svg>
<div class="a" style="left:54px;top:719px;width:317.5px;height:178px;background:#fff;border-radius:5px"></div>
<svg style="left:54px;top:719px;" width="318" height="178" viewBox="0 0 318 178"><rect x="74" y="30" width="39" height="2.5" rx="1" fill="#f5a81c"/><text x="74" y="31.5" font-family="Liberation Sans" font-weight="bold" font-size="10" fill="#222" textLength="39" lengthAdjust="spacingAndGlyphs">LANGUAGE</text>
<circle cx="77" cy="40" r="3" fill="#f5a81c"/><text x="83" y="42.5" font-family="Liberation Sans" font-weight="bold" font-size="6" fill="#333" textLength="103" lengthAdjust="spacingAndGlyphs">Listen and number. Ask and answer.</text><circle cx="191.5" cy="40" r="3.2" fill="#1f8f7c"/><path d="M198 38.5 H200 L203 36 V44 L200 41.5 H198Z" fill="#c0c0c0"/>
<rect x="83" y="46" width="143" height="11" fill="#f9d49a"/><text x="100" y="54" font-family="Liberation Sans" font-size="5.5" fill="#444">I'm good.</text><text x="160" y="54" font-family="Liberation Sans" font-size="5.5" fill="#444">How are you today?</text>
<defs><linearGradient id="bg3" x1="0" y1="0" x2="0" y2="1"><stop offset="0" stop-color="#fffaf5"/><stop offset="1" stop-color="#fbe0c8"/></linearGradient></defs>
<rect x="52.7" y="57" width="204.3" height="103" fill="url(#bg3)"/>
<rect x="77" y="62" width="7" height="5" fill="#222"/><rect x="164" y="62" width="6" height="5" fill="#222"/>
<rect x="64.5" y="70" width="52.5" height="9" rx="3" fill="#e7a9b1"/><text x="90.7" y="76.5" font-family="Liberation Sans" font-size="5" fill="#555" text-anchor="middle">How are you today?</text><path d="M80 79 L78 84 L84 79Z" fill="#e7a9b1"/>
<rect x="125" y="73" width="45" height="12" rx="3" fill="#fff" stroke="#eab0b8" stroke-width=".8"/><path d="M140 85 L138 90 L144 85Z" fill="#fff"/>
<rect x="174" y="64" width="45" height="12" rx="3" fill="#fff" stroke="#eab0b8" stroke-width=".8"/><path d="M190 76 L186 82 L195 76Z" fill="#fff"/>
<rect x="204.5" y="78" width="31" height="8.6" rx="3" fill="#e7a9b1"/><text x="220" y="84" font-family="Liberation Sans" font-size="5" fill="#555" text-anchor="middle">I feel bad.</text>
<text x="147" y="84" font-family="Liberation Sans" font-size="9" fill="#e02020" text-anchor="middle">1</text><text x="196" y="75" font-family="Liberation Sans" font-size="9" fill="#e02020" text-anchor="middle">2</text>
<path d="M75 135 C74 115 78 97 87 95 C96 95 98 110 97 130Z" fill="#6a4428"/><ellipse cx="87" cy="104" rx="8" ry="9.5" fill="#f0c8a8"/><path d="M65 160 C65 130 72 122 86 120 C100 122 107 130 107 160Z" fill="#8fcfb0"/>
<ellipse cx="135" cy="105" rx="8" ry="9.5" fill="#f0c8a8"/><path d="M126 100 C126 90 144 90 144 100 C138 96 132 96 126 100Z" fill="#6a3a20"/><path d="M113 160 C113 128 120 121 135 119 C150 121 156 128 156 160Z" fill="#dd2a2a"/>
<ellipse cx="185" cy="102" rx="8" ry="9.5" fill="#f0c8a8"/><path d="M176 100 C175 88 195 88 194 100 L197 128 H192 L191 106 L179 106 L178 128 H173Z" fill="#6a4424"/><path d="M162 160 C162 128 170 121 185 119 C200 121 206 128 206 160Z" fill="#f2a0b0"/><rect x="174" y="138" width="15" height="20" fill="#3aa8c8"/>
<ellipse cx="230" cy="105" rx="8" ry="9.5" fill="#f0c8a8"/><path d="M221 100 C221 90 240 90 240 100 C234 96 228 96 221 100Z" fill="#8a6038"/><path d="M205 160 C205 128 212 121 229 119 C244 121 248 128 248 160Z" fill="#b9b9bd"/><path d="M217 123 L236 152" stroke="#f0f0f0" stroke-width="4"/><path d="M226 150 C234 146 245 150 248 158 H224Z" fill="#2a3a6a"/></svg>
<div class="a" style="left:54px;top:930px;width:317.5px;height:116px;background:#fff;border-radius:5px 5px 0 0;overflow:hidden"><svg style="left:0;top:0" width="318" height="116" viewBox="0 0 318 116"><rect x="69" y="30" width="50" height="2.5" rx="1" fill="#f5a81c"/><text x="69" y="31" font-family="Liberation Sans" font-weight="bold" font-size="10" fill="#222" textLength="50" lengthAdjust="spacingAndGlyphs">VOCABULARY</text>
<circle cx="72" cy="41" r="3" fill="#f5a81c"/><text x="78" y="43.5" font-family="Liberation Sans" font-weight="bold" font-size="6" fill="#333" textLength="55" lengthAdjust="spacingAndGlyphs">Listen and number.</text><circle cx="140" cy="41" r="3" fill="#1f8f7c"/>
<ellipse cx="96" cy="65" rx="11" ry="12" fill="#f4d8c0"/><path d="M84 62 C84 48 108 48 108 62 L106 58 C100 52 90 52 86 62Z" fill="#e2b450"/><path d="M86 62 C80 66 80 72 84 74Z" fill="#e2b450"/><path d="M88 77 H104 V82 H88Z" fill="#9d88cb"/>
<rect x="137" y="52" width="27" height="17" fill="#bfe3ef"/><rect x="144" y="60" width="14" height="8" fill="none" stroke="#555"/><ellipse cx="155" cy="70" rx="8" ry="4" fill="none" stroke="#e04040" stroke-width="1.5"/><circle cx="141" cy="76" r="8" fill="#c9652b"/>
<ellipse cx="211" cy="67" rx="10" ry="11" fill="#a86b3e"/><path d="M200 62 C198 50 222 48 222 62 C218 56 205 56 200 62Z" fill="#2a0f10"/><path d="M203 78 H219 L220 84 H202Z" fill="#f0f0f0"/>
<rect x="75" y="86" width="43" height="11" rx="2" fill="#a9d8a8"/><text x="96" y="94.5" font-family="Liberation Sans" font-size="7" fill="#333" text-anchor="middle">bad</text><text x="112" y="96" font-family="Liberation Sans" font-size="10" fill="#e02020" text-anchor="middle">6</text>
<rect x="131" y="86" width="43" height="11" rx="2" fill="#a9d8a8"/><text x="149" y="94.5" font-family="Liberation Sans" font-size="7" fill="#333" text-anchor="middle">basketball</text><text x="167" y="96" font-family="Liberation Sans" font-size="10" fill="#e02020" text-anchor="middle">1</text>
<rect x="187" y="86" width="43" height="11" rx="2" fill="#a9d8a8"/><text x="205" y="94.5" font-family="Liberation Sans" font-size="7" fill="#333" text-anchor="middle">good</text><text x="223" y="96" font-family="Liberation Sans" font-size="10" fill="#e02020" text-anchor="middle">3</text>
<path d="M80 116 L86 106 H112 L112 116Z" fill="none" stroke="#ccc"/><ellipse cx="150" cy="110" rx="6" ry="6" fill="#f0b060"/><path d="M218 116 L228 100" stroke="#a06a3a" stroke-width="3"/></svg></div>
<div class="a" style="left:401px;top:268px;width:26px;height:778px;background:#3f3f3f;border-radius:13px 13px 13px 13px"></div>
<svg style="left:407px;top:274px;" width="14" height="11" viewBox="0 0 14 11"><path d="M7 0.5 L13.5 10 H0.5Z" fill="#c8c8c8" stroke="#c8c8c8" stroke-linejoin="round"/></svg>
<div class="a" style="left:408px;top:293px;width:12px;height:155px;background:#c6c6c6;border-radius:6px"></div>
<svg style="left:407px;top:1028px;" width="14" height="10" viewBox="0 0 14 10"><path d="M0.5 0.5 H13.5 L7 9.5Z" fill="#c8c8c8" stroke="#c8c8c8" stroke-linejoin="round"/></svg>
<!-- slide -->
<div class="a" style="left:543.5px;top:281.3px;width:1241px;height:698.7px;background:#fff;"></div>
<svg style="left:0;top:0" width="0" height="0"><symbol id="illus" viewBox="0 0 553 697"><rect x="0" y="0" width="553" height="697" fill="#c7e7ef"/><rect x="356" y="60" width="197" height="430" fill="#f8cf8b"/><rect x="356" y="60" width="3" height="430" fill="#f1c27c"/><path d="M0 0 H553 V48 C535 60 500 88 467 96 C440 103 400 106 357 106 C320 106 290 100 262 94 C235 88 205 86 175 90 C140 95 110 104 82 108 L0 125 Z" fill="#2f4e8b"/><path d="M357 0 H553 V48 C535 60 500 88 467 96 C440 103 400 106 357 106 Z" fill="#33508a" opacity=".5"/><polygon points="10.7,16.9 11.6,19.1 14.0,19.3 12.2,20.9 12.8,23.2 10.7,22.0 8.6,23.2 9.2,20.9 7.4,19.3 9.8,19.1" fill="#f4b836"/><polygon points="25.5,18.5 27.4,23.0 32.2,23.3 28.5,26.5 29.6,31.2 25.5,28.6 21.4,31.2 22.5,26.5 18.8,23.3 23.6,23.0" fill="#f4b836"/><polygon points="50.0,8.0 50.9,10.2 53.3,10.4 51.5,12.0 52.1,14.3 50.0,13.1 47.9,14.3 48.5,12.0 46.7,10.4 49.1,10.2" fill="#f4b836"/><polygon points="149.0,18.5 149.9,20.7 152.3,20.9 150.5,22.5 151.1,24.8 149.0,23.6 146.9,24.8 147.5,22.5 145.7,20.9 148.1,20.7" fill="#f4b836"/><polygon points="166.0,10.0 167.3,13.2 170.8,13.5 168.1,15.7 168.9,19.0 166.0,17.2 163.1,19.0 163.9,15.7 161.2,13.5 164.7,13.2" fill="#f4b836"/><polygon points="408.0,9.5 409.7,13.6 414.2,14.0 410.8,16.9 411.8,21.3 408.0,18.9 404.2,21.3 405.2,16.9 401.8,14.0 406.3,13.6" fill="#f4b836"/><polygon points="506.0,9.5 506.9,11.7 509.3,11.9 507.5,13.5 508.1,15.8 506.0,14.6 503.9,15.8 504.5,13.5 502.7,11.9 505.1,11.7" fill="#f4b836"/><polygon points="533.0,19.0 534.3,22.2 537.8,22.5 535.1,24.7 535.9,28.0 533.0,26.2 530.1,28.0 530.9,24.7 528.2,22.5 531.7,22.2" fill="#f4b836"/><polygon points="450.0,75.0 451.3,78.2 454.8,78.5 452.1,80.7 452.9,84.0 450.0,82.2 447.1,84.0 447.9,80.7 445.2,78.5 448.7,78.2" fill="#f4b836"/><text x="116" y="72.5" font-family="Liberation Sans" font-size="45" font-weight="bold" fill="#ffffff" textLength="312" lengthAdjust="spacingAndGlyphs" stroke="#22386a" stroke-width="1" paint-order="stroke">How Are You Today?</text><rect x="467" y="36" width="53" height="62" rx="4" fill="#2a3f72" opacity=".6"/><rect x="464" y="33" width="53" height="62" rx="4" fill="#f5a91e"/><rect x="469" y="38" width="43" height="43" fill="#fff"/><g fill="#111"><rect x="471.00" y="53.00" width="1.86" height="1.86"/><rect x="471.00" y="54.86" width="1.86" height="1.86"/><rect x="471.00" y="58.57" width="1.86" height="1.86"/><rect x="471.00" y="62.29" width="1.86" height="1.86"/><rect x="471.00" y="64.14" width="1.86" height="1.86"/><rect x="472.86" y="54.86" width="1.86" height="1.86"/><rect x="472.86" y="56.71" width="1.86" height="1.86"/><rect x="472.86" y="58.57" width="1.86" height="1.86"/><rect x="472.86" y="60.43" width="1.86" height="1.86"/><rect x="472.86" y="62.29" width="1.86" height="1.86"/><rect x="474.71" y="53.00" width="1.86" height="1.86"/><rect x="474.71" y="54.86" width="1.86" height="1.86"/><rect x="474.71" y="62.29" width="1.86" height="1.86"/><rect x="476.57" y="53.00" width="1.86" height="1.86"/><rect x="476.57" y="56.71" width="1.86" height="1.86"/><rect x="476.57" y="58.57" width="1.86" height="1.86"/><rect x="476.57" y="60.43" width="1.86" height="1.86"/><rect x="476.57" y="62.29" width="1.86" height="1.86"/><rect x="478.43" y="53.00" width="1.86" height="1.86"/><rect x="478.43" y="58.57" width="1.86" height="1.86"/><rect x="478.43" y="62.29" width="1.86" height="1.86"/><rect x="478.43" y="64.14" width="1.86" height="1.86"/><rect x="480.29" y="53.00" width="1.86" height="1.86"/><rect x="480.29" y="56.71" width="1.86" height="1.86"/><rect x="480.29" y="58.57" width="1.86" height="1.86"/><rect x="480.29" y="62.29" width="1.86" height="1.86"/><rect x="480.29" y="64.14" width="1.86" height="1.86"/><rect x="482.14" y="56.71" width="1.86" height="1.86"/><rect x="484.00" y="40.00" width="1.86" height="1.86"/><rect x="484.00" y="43.71" width="1.86" height="1.86"/><rect x="484.00" y="45.57" width="1.86" height="1.86"/><rect x="484.00" y="49.29" width="1.86" height="1.86"/><rect x="484.00" y="51.14" width="1.86" height="1.86"/><rect x="484.00" y="53.00" width="1.86" height="1.86"/><rect x="484.00" y="62.29" width="1.86" height="1.86"/><rect x="484.00" y="69.71" width="1.86" height="1.86"/><rect x="484.00" y="75.29" width="1.86" height="1.86"/><rect x="485.86" y="40.00" width="1.86" height="1.86"/><rect x="485.86" y="49.29" width="1.86" height="1.86"/><rect x="485.86" y="51.14" width="1.86" height="1.86"/><rect x="485.86" y="54.86" width="1.86" height="1.86"/><rect x="485.86" y="56.71" width="1.86" height="1.86"/><rect x="485.86" y="58.57" width="1.86" height="1.86"/><rect x="485.86" y="60.43" width="1.86" height="1.86"/><rect x="485.86" y="62.29" width="1.86" height="1.86"/><rect x="485.86" y="66.00" width="1.86" height="1.86"/><rect x="485.86" y="67.86" width="1.86" height="1.86"/><rect x="485.86" y="69.71" width="1.86" height="1.86"/><rect x="485.86" y="73.43" width="1.86" height="1.86"/><rect x="485.86" y="75.29" width="1.86" height="1.86"/><rect x="487.71" y="45.57" width="1.86" height="1.86"/><rect x="487.71" y="47.43" width="1.86" height="1.86"/><rect x="487.71" y="49.29" width="1.86" height="1.86"/><rect x="487.71" y="54.86" width="1.86" height="1.86"/><rect x="487.71" y="56.71" width="1.86" height="1.86"/><rect x="487.71" y="58.57" width="1.86" height="1.86"/><rect x="487.71" y="60.43" width="1.86" height="1.86"/><rect x="487.71" y="62.29" width="1.86" height="1.86"/><rect x="487.71" y="66.00" width="1.86" height="1.86"/><rect x="487.71" y="67.86" width="1.86" height="1.86"/><rect x="487.71" y="69.71" width="1.86" height="1.86"/><rect x="487.71" y="71.57" width="1.86" height="1.86"/><rect x="489.57" y="45.57" width="1.86" height="1.86"/><rect x="489.57" y="54.86" width="1.86" height="1.86"/><rect x="489.57" y="56.71" width="1.86" height="1.86"/><rect x="489.57" y="58.57" width="1.86" height="1.86"/><rect x="489.57" y="62.29" width="1.86" height="1.86"/><rect x="489.57" y="64.14" width="1.86" height="1.86"/><rect x="489.57" y="66.00" width="1.86" height="1.86"/><rect x="489.57" y="67.86" width="1.86" height="1.86"/><rect x="489.57" y="69.71" width="1.86" height="1.86"/><rect x="489.57" y="71.57" width="1.86" height="1.86"/><rect x="489.57" y="73.43" width="1.86" height="1.86"/><rect x="489.57" y="75.29" width="1.86" height="1.86"/><rect x="489.57" y="77.14" width="1.86" height="1.86"/><rect x="491.43" y="40.00" width="1.86" height="1.86"/><rect x="491.43" y="41.86" width="1.86" height="1.86"/><rect x="491.43" y="47.43" width="1.86" height="1.86"/><rect x="491.43" y="49.29" width="1.86" height="1.86"/><rect x="491.43" y="51.14" width="1.86" height="1.86"/><rect x="491.43" y="53.00" width="1.86" height="1.86"/><rect x="491.43" y="54.86" width="1.86" height="1.86"/><rect x="491.43" y="60.43" width="1.86" height="1.86"/><rect x="491.43" y="62.29" width="1.86" height="1.86"/><rect x="491.43" y="64.14" width="1.86" height="1.86"/><rect x="491.43" y="66.00" width="1.86" height="1.86"/><rect x="491.43" y="67.86" width="1.86" height="1.86"/><rect x="491.43" y="69.71" width="1.86" height="1.86"/><rect x="491.43" y="73.43" width="1.86" height="1.86"/><rect x="491.43" y="75.29" width="1.86" height="1.86"/><rect x="493.29" y="41.86" width="1.86" height="1.86"/><rect x="493.29" y="45.57" width="1.86" height="1.86"/><rect x="493.29" y="54.86" width="1.86" height="1.86"/><rect x="493.29" y="56.71" width="1.86" height="1.86"/><rect x="493.29" y="58.57" width="1.86" height="1.86"/><rect x="493.29" y="66.00" width="1.86" height="1.86"/><rect x="493.29" y="67.86" width="1.86" height="1.86"/><rect x="495.14" y="41.86" width="1.86" height="1.86"/><rect x="495.14" y="45.57" width="1.86" height="1.86"/><rect x="495.14" y="47.43" width="1.86" height="1.86"/><rect x="495.14" y="49.29" width="1.86" height="1.86"/><rect x="495.14" y="51.14" width="1.86" height="1.86"/><rect x="495.14" y="53.00" width="1.86" height="1.86"/><rect x="495.14" y="58.57" width="1.86" height="1.86"/><rect x="495.14" y="66.00" width="1.86" height="1.86"/><rect x="495.14" y="67.86" width="1.86" height="1.86"/><rect x="495.14" y="69.71" width="1.86" height="1.86"/><rect x="495.14" y="71.57" width="1.86" height="1.86"/><rect x="495.14" y="73.43" width="1.86" height="1.86"/><rect x="497.00" y="54.86" width="1.86" height="1.86"/><rect x="497.00" y="60.43" width="1.86" height="1.86"/><rect x="497.00" y="69.71" width="1.86" height="1.86"/><rect x="497.00" y="71.57" width="1.86" height="1.86"/><rect x="497.00" y="75.29" width="1.86" height="1.86"/><rect x="498.86" y="54.86" width="1.86" height="1.86"/><rect x="498.86" y="56.71" width="1.86" height="1.86"/><rect x="498.86" y="62.29" width="1.86" height="1.86"/><rect x="498.86" y="64.14" width="1.86" height="1.86"/><rect x="498.86" y="66.00" width="1.86" height="1.86"/><rect x="498.86" y="71.57" width="1.86" height="1.86"/><rect x="500.71" y="53.00" width="1.86" height="1.86"/><rect x="500.71" y="56.71" width="1.86" height="1.86"/><rect x="500.71" y="58.57" width="1.86" height="1.86"/><rect x="500.71" y="67.86" width="1.86" height="1.86"/><rect x="500.71" y="73.43" width="1.86" height="1.86"/><rect x="500.71" y="75.29" width="1.86" height="1.86"/><rect x="500.71" y="77.14" width="1.86" height="1.86"/><rect x="502.57" y="53.00" width="1.86" height="1.86"/><rect x="502.57" y="56.71" width="1.86" height="1.86"/><rect x="502.57" y="58.57" width="1.86" height="1.86"/><rect x="502.57" y="60.43" width="1.86" height="1.86"/><rect x="502.57" y="64.14" width="1.86" height="1.86"/><rect x="502.57" y="66.00" width="1.86" height="1.86"/><rect x="502.57" y="71.57" width="1.86" height="1.86"/><rect x="504.43" y="54.86" width="1.86" height="1.86"/><rect x="504.43" y="56.71" width="1.86" height="1.86"/><rect x="504.43" y="58.57" width="1.86" height="1.86"/><rect x="504.43" y="60.43" width="1.86" height="1.86"/><rect x="504.43" y="64.14" width="1.86" height="1.86"/><rect x="504.43" y="66.00" width="1.86" height="1.86"/><rect x="504.43" y="71.57" width="1.86" height="1.86"/><rect x="506.29" y="53.00" width="1.86" height="1.86"/><rect x="506.29" y="56.71" width="1.86" height="1.86"/><rect x="506.29" y="58.57" width="1.86" height="1.86"/><rect x="506.29" y="69.71" width="1.86" height="1.86"/><rect x="508.14" y="53.00" width="1.86" height="1.86"/><rect x="508.14" y="56.71" width="1.86" height="1.86"/><rect x="508.14" y="66.00" width="1.86" height="1.86"/><rect x="508.14" y="73.43" width="1.86" height="1.86"/><rect x="508.14" y="75.29" width="1.86" height="1.86"/><rect x="508.14" y="77.14" width="1.86" height="1.86"/><rect x="471.93" y="40.93" width="11.14" height="11.14" fill="none" stroke="#111" stroke-width="1.86"/><rect x="474.71" y="43.71" width="5.57" height="5.57"/><rect x="497.93" y="40.93" width="11.14" height="11.14" fill="none" stroke="#111" stroke-width="1.86"/><rect x="500.71" y="43.71" width="5.57" height="5.57"/><rect x="471.93" y="66.93" width="11.14" height="11.14" fill="none" stroke="#111" stroke-width="1.86"/><rect x="474.71" y="69.71" width="5.57" height="5.57"/></g><text x="490.5" y="91.5" font-family="Liberation Sans" font-size="6.5" font-weight="bold" fill="#fff" textLength="40" lengthAdjust="spacingAndGlyphs" text-anchor="middle">SCAN FOR AUDIO</text><g><path d="M0 73 C22 45 50 18 84 2 L90 0 C91 45 82 95 67 137 L0 110 Z" fill="#ffffff"/><path d="M58 14 C68 8 78 3 86 1 L90 0 C90 8 90 17 89 26 Z" fill="#e8174f"/><path d="M0 106 L68 134 L66 141 L0 114Z" fill="#1f5fb0"/><path d="M0 116 L46 135 L42 148 L0 131Z" fill="#f05a5a"/><path d="M3 118 L0 128 M9 120 L5 131 M15 123 L11 134 M21 125 L17 136 M27 128 L23 139 M33 130 L29 141 M39 133 L35 144" stroke="#fff" stroke-width="2"/><path d="M0 131 L42 148 L40 155 L0 139Z" fill="#1f5fb0"/><path d="M67 107 L91 118 L82 139 L58 163 L54 152 Z" fill="#22b5c2"/><path d="M64 110 L88 120 L84 127 L60 117Z" fill="#1f5fb0"/><circle cx="52" cy="61" r="27" fill="#15305e"/><circle cx="52" cy="61" r="23.5" fill="#f7ab1d"/><text x="52" y="78" font-family="Liberation Sans" font-size="38" font-weight="bold" fill="#fff" text-anchor="middle" stroke="#7a4a00" stroke-width=".8" paint-order="stroke">1</text><g transform="rotate(22 72 30)"><rect x="54" y="24" width="36" height="10" rx="2" fill="#222"/><text x="72" y="32" font-family="Liberation Sans" font-size="7.5" font-weight="bold" fill="#fff" text-anchor="middle">LESSON</text></g><circle cx="8" cy="96" r="4" fill="#15305e"/><circle cx="21" cy="101" r="4" fill="#15305e"/><circle cx="34" cy="108" r="4" fill="#15305e"/><circle cx="50" cy="115" r="4" fill="#15305e"/><path d="M0 142 C12 145 22 165 18 196 L0 200Z" fill="#e8174f"/><path d="M2 175 L8 168 L6 180 L13 172" fill="none" stroke="#15305e" stroke-width="1.2"/></g><path d="M101 131 C130 129 170 129 197 131 C199 134 198 137 195 138 C165 140 130 140 103 138 C100 136 100 133 101 131Z" fill="#f5a81c"/><text x="101" y="132" font-family="Liberation Sans" font-size="25" font-weight="bold" fill="#222" textLength="96" lengthAdjust="spacingAndGlyphs" >WARM-UP</text><circle cx="84" cy="160" r="9" fill="#f5a81c"/><text x="84" y="164.5" font-family="Liberation Sans" font-size="12" font-weight="bold" fill="#fff" text-anchor="middle">A</text><text x="101" y="166" font-family="Liberation Sans" font-size="16.5" font-weight="bold" fill="#262626" textLength="131" lengthAdjust="spacingAndGlyphs" >Listen and repeat.</text><circle cx="251" cy="162" r="9" fill="#1f8f7c"/><path d="M241 164 A10 10 0 0 1 261 164" fill="none" stroke="#f0a820" stroke-width="2.5"/>
<rect x="244" y="153" width="14" height="5" rx="2" fill="#222"/>
<text x="251" y="166" font-family="Liberation Sans" font-size="7.5" font-weight="bold" fill="#fff" text-anchor="middle">001</text><g transform="translate(269,146) scale(1.0)"><path d="M1 10 H8 L17 2 V28 L8 20 H1Z" fill="#a9a9a9"/>
<path d="M21 6 L24 3 M22 11 L26 10 M22 16 L27 16 M22 21 L26 22 M21 26 L24 29" stroke="#a9a9a9" stroke-width="2" stroke-linecap="round"/></g><g fill="#f5fbfd"><ellipse cx="318" cy="240" rx="40" ry="30"/><ellipse cx="280" cy="252" rx="25" ry="18"/><ellipse cx="340" cy="215" rx="20" ry="30"/><rect x="262" y="240" width="94" height="33"/></g><path d="M160 366 C160 340 170 320 180 320 C190 320 192 345 195 366Z M190 366 C195 345 205 330 215 333 C225 338 222 355 222 366Z" fill="#a4d3de"/><path d="M0 366 H356 V447 H553 V697 H0Z" fill="#d9ab6f"/><rect x="316" y="437" width="237" height="44" fill="#4a9a98"/><rect x="316" y="476" width="237" height="5" fill="#2f7f7e"/><rect x="356" y="437" width="197" height="24.5" fill="#f8cf8b"/><path d="M0 611 C100 590 200 566 300 553 C360 548 460 565 553 583 V697 H0Z" fill="#b4884a"/><path d="M0 627 H93 L120 640 V697 H0Z" fill="#b07f48" opacity=".7"/><ellipse cx="305" cy="520" rx="60" ry="18" fill="#c99c62"/><ellipse cx="477" cy="676" rx="62" ry="15" fill="#a87740"/><path d="M0 699 L356 613 L553 658" fill="none" stroke="#f1ebde" stroke-width="11"/><rect x="0" y="239" width="159" height="167" fill="#c3c3c3"/><path d="M0 196 H150 C180 205 215 222 234 236 L222 240 H0Z" fill="#6f8b72"/><path d="M40 198 C50 210 55 225 55 239 M95 198 C105 210 110 225 110 239 M150 198 C160 212 162 225 162 239" stroke="#5a7560" stroke-width="1.2" fill="none"/><path d="M159 239 H231 L159 289Z" fill="#2e5c4c"/><rect x="192" y="239" width="8" height="167" fill="#b3b3b3"/><path d="M0 371 L155 366 V390 L0 395Z" fill="#8d5b34"/><ellipse cx="36" cy="280" rx="34" ry="34" fill="#d8b14c"/><ellipse cx="40" cy="290" rx="28" ry="26" fill="#f8d6bf"/><path d="M5 265 C15 245 50 240 68 262 C55 258 30 258 5 275Z" fill="#d8b14c"/><circle cx="30" cy="290" r="5.5" fill="#fff"/><circle cx="52" cy="290" r="5.5" fill="#fff"/><circle cx="31" cy="292" r="2.5" fill="#4a2a1a"/><circle cx="51" cy="292" r="2.5" fill="#4a2a1a"/><rect x="10" y="314" width="36" height="66" rx="8" fill="#9d88cb"/><path d="M22 368 H60 L64 412 H46 L44 390 H22Z" fill="#4a8fd8"/><path d="M24 412 H45 V420 H24Z M46 412 H66 V420 H46Z" fill="#1a1a1a"/><g fill="#2a0f10"><ellipse cx="115" cy="266" rx="36" ry="24"/><circle cx="79.5" cy="270.2" r="9.5"/><circle cx="79.2" cy="263.7" r="9.5"/><circle cx="81.3" cy="257.5" r="9.5"/><circle cx="85.9" cy="251.8" r="9.5"/><circle cx="92.6" cy="247.2" r="9.5"/><circle cx="100.9" cy="243.9" r="9.5"/><circle cx="110.2" cy="242.2" r="9.5"/><circle cx="119.8" cy="242.2" r="9.5"/><circle cx="129.1" cy="243.9" r="9.5"/><circle cx="137.4" cy="247.2" r="9.5"/><circle cx="144.1" cy="251.8" r="9.5"/><circle cx="148.7" cy="257.5" r="9.5"/><circle cx="150.8" cy="263.7" r="9.5"/><circle cx="150.5" cy="270.2" r="9.5"/></g><ellipse cx="122" cy="287" rx="29" ry="25" fill="#a86b3e"/><circle cx="115.5" cy="284" r="7.5" fill="#fff"/><circle cx="134.5" cy="283" r="7.5" fill="#fff"/><circle cx="116" cy="284" r="3.5" fill="#1a0a0a"/><circle cx="134" cy="283" r="3.5" fill="#1a0a0a"/><ellipse cx="121" cy="299" rx="3" ry="4" fill="#e07090"/><path d="M82 312 C85 300 120 300 130 310 L162 300 C168 300 170 312 162 318 L130 330 L128 372 H82Z" fill="#f7f1ee"/><rect x="82" y="318" width="14" height="32" fill="#f0733a"/><rect x="104" y="320" width="14" height="20" fill="#f0733a"/><circle cx="165" cy="297" r="7" fill="#a86b3e"/><path d="M84 360 H142 V415 H120 L118 385 H100 V415 H84Z" fill="#2a9890"/><path d="M100 412 H123 V420 H100Z M120 412 H144 V420 H120Z" fill="#2a1010"/><defs><clipPath id="netclip"><path d="M0 356 H158 V627 H0Z"/></clipPath><clipPath id="netclip2"><rect x="-5" y="0" width="563" height="697"/></clipPath></defs><g clip-path="url(#netclip)" stroke="#f5efe6" stroke-width="1.4" opacity=".6" fill="none"><path d="M-300 356 L-29 627 M-29 356 L-300 627" /><path d="M-270 356 L1 627 M1 356 L-270 627" /><path d="M-240 356 L31 627 M31 356 L-240 627" /><path d="M-210 356 L61 627 M61 356 L-210 627" /><path d="M-180 356 L91 627 M91 356 L-180 627" /><path d="M-150 356 L121 627 M121 356 L-150 627" /><path d="M-120 356 L151 627 M151 356 L-120 627" /><path d="M-90 356 L181 627 M181 356 L-90 627" /><path d="M-60 356 L211 627 M211 356 L-60 627" /><path d="M-30 356 L241 627 M241 356 L-30 627" /><path d="M0 356 L271 627 M271 356 L0 627" /><path d="M30 356 L301 627 M301 356 L30 627" /><path d="M60 356 L331 627 M331 356 L60 627" /><path d="M90 356 L361 627 M361 356 L90 627" /><path d="M120 356 L391 627 M391 356 L120 627" /><path d="M150 356 L421 627 M421 356 L150 627" /><path d="M180 356 L451 627 M451 356 L180 627" /><path d="M210 356 L481 627 M481 356 L210 627" /><path d="M240 356 L511 627 M511 356 L240 627" /><path d="M270 356 L541 627 M541 356 L270 627" /><path d="M300 356 L571 627 M571 356 L300 627" /><path d="M330 356 L601 627 M601 356 L330 627" /><path d="M360 356 L631 627 M631 356 L360 627" /><path d="M390 356 L661 627 M661 356 L390 627" /></g><rect x="0" y="346" width="166" height="9" fill="#f8f6f2"/><path d="M158 356 C120 385 88 420 82 470 L80 627" fill="none" stroke="#f6f4f0" stroke-width="8"/><path d="M155 346 H166 L175 647 H160Z" fill="#f6f4f0"/><defs><clipPath id="ballclip"><circle cx="124" cy="639" r="33"/></clipPath></defs><circle cx="124" cy="639" r="33.5" fill="#fafafa" stroke="#2a2a2a" stroke-width="1.5"/><g clip-path="url(#ballclip)" fill="#222"><polygon points="124,622 140,633 134,651 114,651 108,633"/><polygon points="92,620 100,630 96,645 86,648 84,625"/><polygon points="152,618 160,640 150,648 146,630"/><polygon points="108,668 114,660 134,660 140,668 124,676"/><polygon points="118,600 130,600 132,612 116,612"/></g><path d="M124 622 L124 612 M108 633 L100 630 M140 633 L146 630 M114 651 L96 645 M134 651 L150 648 M114 651 L114 660 M134 651 L134 660" stroke="#555" stroke-width="1"/><path d="M272 488 H290 L282 512 H266Z M333 486 H352 L356 512 H338Z" fill="#8a6470"/><path d="M250 522 C252 510 270 502 278 508 L276 524 H252Z M338 510 C345 502 358 505 360 515 L358 532 C350 534 342 530 338 524Z" fill="#d690a8"/><path d="M276 444 H349 L350 491 H330 L320 470 L300 491 H276Z" fill="#f2c96a"/><path d="M252 380 C270 368 330 366 350 378 L368 430 L350 437 L348 460 H262 L258 425 L240 432Z" fill="#8c6b70"/><path d="M290 372 L305 392 L322 372Z" fill="#f3c14a"/><path d="M258 392 C245 370 230 345 228 322 L240 318 C244 340 255 360 268 378Z" fill="#f6c7a4"/><circle cx="231" cy="315" r="12" fill="#fbfbfb" stroke="#ddd" stroke-width="1"/><path d="M287 410 C300 400 338 405 342 425 C342 445 320 455 300 452 C285 448 280 425 287 410Z" fill="#8a5e3c"/><path d="M250 318 C236 335 238 355 242 365 C255 368 270 370 292 372 L290 320Z M338 318 C350 330 365 345 360 360 L340 350Z" fill="#ee6f2a"/><ellipse cx="310" cy="338" rx="40" ry="36" fill="#f9d0b0"/><path d="M254 320 C252 295 275 277 305 277 C322 277 335 282 342 290 L320 312 L256 321Z" fill="#7db4e8"/><path d="M300 318 C318 300 335 285 350 280 C356 282 356 292 352 297 C340 305 320 315 300 320Z" fill="#2c6fc9"/><ellipse cx="298" cy="334" rx="8" ry="7.5" fill="#fff"/><ellipse cx="323" cy="333" rx="8" ry="7.5" fill="#fff"/><circle cx="299" cy="335" r="3.5" fill="#1b4a2c"/><circle cx="323" cy="334" r="3.5" fill="#1b4a2c"/><circle cx="299" cy="325" r="54" fill="none" stroke="#e8101a" stroke-width="4"/><rect x="394" y="228" width="134" height="188" fill="#e2ebc6" stroke="#2e6f6e" stroke-width="4"/><path d="M420 230 L528 340 M470 230 L528 290" stroke="#f1f6e4" stroke-width="8" opacity=".7"/><rect x="396" y="316" width="105" height="6" fill="#8b6a48"/><ellipse cx="478" cy="350" rx="48" ry="15" fill="#f8bad6"/><path d="M452 305 C462 298 490 298 500 306 L505 345 H458Z" fill="#dc5aa0"/><path d="M455 312 C440 320 425 322 415 318 L413 325 C430 332 448 330 460 322Z M495 310 C505 290 510 270 515 245 L505 242 C500 265 492 285 485 300Z" fill="#f09ac8"/><ellipse cx="478" cy="265" rx="32" ry="22" fill="#f2cf50"/><ellipse cx="452" cy="272" rx="20" ry="23" fill="#f8d1b6"/><circle cx="450" cy="270" r="6" fill="#fff"/><circle cx="449" cy="270" r="3" fill="#2aa0c0"/><path d="M465 230 V416 M396 304 H528 M396 359 H528" stroke="#5ab4d8" stroke-width="1.8"/><g fill="#6b3c1a"><circle cx="417" cy="375" r="12"/><circle cx="446" cy="370" r="14"/><circle cx="470" cy="378" r="12"/><circle cx="486" cy="381" r="13"/><circle cx="506" cy="373" r="12"/><circle cx="521" cy="390" r="13"/><circle cx="507" cy="409" r="11"/><circle cx="489" cy="426" r="13"/><circle cx="480" cy="405" r="13"/></g><path d="M444 478 H492 L496 572 H440Z" fill="#d94848"/><path d="M478 480 C500 485 515 510 518 535 C515 545 490 545 470 540 L475 525 L495 527 C492 510 482 495 470 490Z" fill="#f07a2a"/><circle cx="487" cy="448" r="8" fill="#9a6638"/><ellipse cx="440" cy="437" rx="46" ry="40" fill="#a06c3c"/><path d="M396 420 C398 392 420 380 445 380 C470 380 490 392 494 415 C480 400 460 395 440 396 C420 397 405 405 396 420Z" fill="#6b3c1a"/><g fill="#6b3c1a"><circle cx="410" cy="392" r="10"/><circle cx="430" cy="386" r="10"/><circle cx="452" cy="386" r="10"/><circle cx="472" cy="390" r="10"/></g><path d="M410 416 C415 412 422 412 426 415 M444 414 C450 410 458 411 462 415" fill="none" stroke="#4a2412" stroke-width="2.5" stroke-linecap="round"/><ellipse cx="417" cy="433" rx="11" ry="10" fill="#fff"/><ellipse cx="452" cy="433" rx="11" ry="10" fill="#fff"/><circle cx="417" cy="434" r="5" fill="#1a0a0a"/><circle cx="449" cy="434" r="5" fill="#1a0a0a"/><ellipse cx="430" cy="455" rx="3" ry="2" fill="#b03a3a"/><circle cx="433" cy="519" r="32" fill="#c9652b"/><path d="M405 505 C420 500 445 500 462 510 M402 530 C420 525 445 525 464 532 M445 488 C460 505 462 530 448 550" fill="none" stroke="#2a1a10" stroke-width="2"/><path d="M440 510 C450 500 465 498 472 505 L471 528 C462 530 450 528 442 522Z" fill="#8a5a30"/><path d="M443 571 H489 L492 636 H441Z" fill="#3f8ad8"/><rect x="478" y="573" width="4" height="62" fill="#fff" opacity=".9"/><rect x="451" y="636" width="12" height="24" fill="#8a5a30"/><rect x="471" y="636" width="12" height="24" fill="#8a5a30"/><path d="M420 675 C425 662 445 655 453 660 V680 H420Z M455 675 C460 660 480 655 487 660 V680 H455Z" fill="#2b48b8"/><circle cx="443" cy="430" r="54" fill="none" stroke="#e8101a" stroke-width="4"/><path d="M190 503 C203 497 240 496 252 502 L257 558 L249 560 L247 574 H196 L188 548Z" fill="#8cc63f"/><path d="M252 540 L260 538 L258 600 L250 598Z" fill="#f7d2b8"/><path d="M187 571 H262 L265 628 H235 L230 610 L222 628 H186Z" fill="#2a9a52"/><path d="M212 560 L222 560 L240 600 L232 604Z" fill="#f7d2b8"/><path d="M222 600 C225 588 245 590 246 606 L236 614Z M248 596 C256 586 270 592 269 610 L258 614Z" fill="#f7d2b8"/><path d="M189 630 H212 L210 663 H191Z M248 634 H271 L274 666 H252Z" fill="#fafafa"/><ellipse cx="237" cy="464" rx="48" ry="37" fill="#f7d8c0"/><circle cx="191" cy="468" r="7" fill="#f3c4aa"/><path d="M187 445 C182 412 205 398 235 400 C265 400 285 412 282 440 L272 430 H200 L190 448Z" fill="#161616"/><path d="M175 418 L192 428 M173 430 L190 436 M176 441 L190 444" stroke="#161616" stroke-width="4" stroke-linecap="round"/><circle cx="218.5" cy="455" r="20" fill="none" stroke="#2352c6" stroke-width="4.5"/><circle cx="266" cy="452" r="20" fill="none" stroke="#2352c6" stroke-width="4.5"/><ellipse cx="222" cy="458" rx="9" ry="7" fill="#fff"/><ellipse cx="262" cy="456" rx="9" ry="7" fill="#fff"/><circle cx="225" cy="459" r="3.5" fill="#1a1a1a"/><circle cx="258" cy="457" r="3.5" fill="#1a1a1a"/><path d="M198 455 C180 450 168 458 172 470" fill="none" stroke="#2352c6" stroke-width="3.5"/><ellipse cx="244" cy="480" rx="4" ry="3" fill="#c05060"/><circle cx="232.5" cy="450.5" r="56" fill="none" stroke="#e8101a" stroke-width="4"/><circle cx="113" cy="202" r="23" fill="#e9f3f4"/><circle cx="113" cy="202" r="20" fill="#fff"/><g fill="#7b3f1c"><circle cx="101" cy="196" r="5.5"/><circle cx="106" cy="188" r="5.5"/><circle cx="115" cy="185" r="5.5"/><circle cx="124" cy="188" r="5.5"/><circle cx="127" cy="196" r="4.5"/><circle cx="100" cy="205" r="4.5"/></g><ellipse cx="116" cy="206" rx="11" ry="12" fill="#a86b3e"/><circle cx="112" cy="205" r="2.5" fill="#fff"/><circle cx="120" cy="205" r="2.5" fill="#fff"/><path d="M102 222 C106 215 122 215 128 222Z" fill="#f0733a"/><circle cx="330" cy="202" r="23" fill="#eef6f7"/><circle cx="330" cy="202" r="20" fill="#fff"/><path d="M318 198 C314 210 318 218 324 218 L322 200Z M342 198 C348 206 346 216 338 218 L340 200Z" fill="#ee6f2a"/><ellipse cx="331" cy="206" rx="11" ry="11" fill="#f9cba8"/><path d="M314 199 C314 188 330 184 342 190 C348 187 352 190 350 194 L340 197 L316 202Z" fill="#4c8fd8"/><circle cx="327" cy="206" r="2" fill="#2a7a6a"/><circle cx="335" cy="206" r="2" fill="#2a7a6a"/><path d="M320 222 C324 216 338 216 342 222Z" fill="#8c6b70"/><path d="M150 190 H286 A5 5 0 0 1 291 195 V210 A5 5 0 0 1 286 215 H150 L130 218 L142 208 V195 A5 5 0 0 1 147 190Z" fill="#fff" stroke="#f3ecd9" stroke-width="1.5"/><text x="161" y="207.5" font-family="Liberation Sans" font-size="12.5" font-weight="normal" fill="#222" textLength="118" lengthAdjust="spacingAndGlyphs" font-weight="600">How are you today?</text><path d="M366 190 H446 A5 5 0 0 1 451 195 V210 A5 5 0 0 1 446 215 H366 L350 218 L358 208 V195 A5 5 0 0 1 363 190Z" fill="#fff" stroke="#f6e6c0" stroke-width="1.5"/><text x="379" y="207.5" font-family="Liberation Sans" font-size="12.5" font-weight="normal" fill="#222" textLength="59" lengthAdjust="spacingAndGlyphs" >I'm great!</text><rect x="65" y="659" width="288" height="33" rx="9" fill="#f7f3ea" opacity=".92"/><circle cx="81" cy="676" r="9" fill="#f5a81c"/><text x="81" y="680.5" font-family="Liberation Sans" font-size="12" font-weight="bold" fill="#fff" text-anchor="middle">B</text><text x="98" y="681" font-family="Liberation Sans" font-size="15.5" font-weight="bold" fill="#262626" textLength="218" lengthAdjust="spacingAndGlyphs" >Listen and circle the speakers.</text><circle cx="332" cy="678" r="9" fill="#1f8f7c"/><path d="M322 680 A10 10 0 0 1 342 680" fill="none" stroke="#f0a820" stroke-width="2.5"/>
<rect x="325" y="669" width="14" height="5" rx="2" fill="#222"/>
<text x="332" y="682" font-family="Liberation Sans" font-size="7.5" font-weight="bold" fill="#fff" text-anchor="middle">002</text><g transform="translate(358,662) scale(0.95)"><path d="M1 10 H8 L17 2 V28 L8 20 H1Z" fill="#a9a9a9"/>
<path d="M21 6 L24 3 M22 11 L26 10 M22 16 L27 16 M22 21 L26 22 M21 26 L24 29" stroke="#a9a9a9" stroke-width="2" stroke-linecap="round"/></g></symbol></svg>
<svg style="left:877px;top:283px" width="553" height="697" viewBox="0 0 553 697"><use href="#illus"/></svg>
<div class="a" style="left:1894px;top:267px;width:27px;height:648px;background:#3f3f3f;border-radius:13px"></div>
<svg style="left:1900px;top:275px;" width="14" height="10" viewBox="0 0 14 10"><path d="M7 0.5 L13.5 9.5 H0.5Z" fill="#c8c8c8" stroke="#c8c8c8" stroke-linejoin="round"/></svg>
<div class="a" style="left:1901px;top:293px;width:12px;height:35px;background:#c6c6c6;border-radius:6px"></div>
<svg style="left:1900px;top:898px;" width="14" height="10" viewBox="0 0 14 10"><path d="M0.5 0.5 H13.5 L7 9.5Z" fill="#c8c8c8" stroke="#c8c8c8" stroke-linejoin="round"/></svg>
<svg style="left:1899px;top:919px;" width="15" height="19" viewBox="0 0 15 19"><path d="M7.5 0.5 L14 8 H1Z M7.5 8 L14 18 H1Z" fill="#c8c8c8" stroke="#c8c8c8" stroke-linejoin="round"/></svg>
<svg style="left:1899px;top:945px;" width="15" height="19" viewBox="0 0 15 19"><path d="M1 1 H14 L7.5 11Z M1 7 H14 L7.5 18Z" fill="#c8c8c8" stroke="#c8c8c8" stroke-linejoin="round"/></svg>
<div class="a" style="left:432px;top:997px;width:1488px;height:1px;background:#8a8a8a;"></div>
<div class="a" style="left:430px;top:268px;width:1px;height:776px;background:#8c8c8c;"></div>
<div class="a" style="left:447.5px;top:1009.3px;font-size:22px;color:#ececec;letter-spacing:0.1px;">Click to add notes</div>
<div class="a" style="left:1894px;top:1000px;width:27px;height:45px;background:#3f3f3f;border-radius:13px"></div>
<svg style="left:1900px;top:1007px;" width="14" height="9" viewBox="0 0 14 9"><path d="M7 0.5 L13.5 8.5 H0.5Z" fill="#c8c8c8" stroke="#c8c8c8" stroke-linejoin="round"/></svg>
<svg style="left:1900px;top:1030px;" width="14" height="9" viewBox="0 0 14 9"><path d="M0.5 0.5 H13.5 L7 8.5Z" fill="#c8c8c8" stroke="#c8c8c8" stroke-linejoin="round"/></svg>
<!-- status -->
<div class="a" style="left:0px;top:1046px;width:1920px;height:34px;background:#525252;"></div>
<div class="a" style="left:0px;top:1046px;width:1920px;height:1.5px;background:#3a3a3a;"></div>
<div class="a" style="left:0px;top:1047px;width:2px;height:33px;background:#2e2e2e;"></div>
<div class="a" style="left:17.5px;top:1057.2px;font-size:15px;color:#ffffff;letter-spacing:0.2px;">Slide 1 of 17</div>
<div class="a" style="left:150px;top:1057.2px;font-size:15px;color:#ffffff;">English (United States)</div>
<svg style="left:328px;top:1052px;" width="22" height="22" viewBox="0 0 22 22"><circle cx="9.5" cy="3.5" r="2.6" fill="none" stroke="#fff" stroke-width="1.3"/><path d="M1 5.5 C4 8.5 7 9.5 9.5 9.5 C12 9.5 15 8.5 18 5.5 M9.5 9.5 V13 L5 21 M9.5 13 L11 16" fill="none" stroke="#fff" stroke-width="1.4" stroke-linecap="round"/><path d="M12 14 L21 21.5 M21 14 L12 21.5" stroke="#fff" stroke-width="1.4"/></svg>
<div class="a" style="left:355.5px;top:1055.8px;font-size:15.5px;color:#ffffff;font-weight:bold;letter-spacing:0.2px;">Accessibility: Investigate</div>
<svg style="left:1162px;top:1051px;" width="26" height="24" viewBox="0 0 26 24"><path d="M9 6 L13 2 L17 6" fill="none" stroke="#fff" stroke-width="1.4"/><path d="M1 10 H25 M1 16.5 H25 M1 23 H25" stroke="#fff" stroke-width="1.4"/></svg>
<div class="a" style="left:1190px;top:1056.8px;font-size:15px;color:#ffffff;letter-spacing:0.1px;">Notes</div>
<svg style="left:1258px;top:1053px;" width="24" height="21" viewBox="0 0 24 21"><path d="M1 1 H22.5 V14 H9 L4 19.5 V14 H1Z" fill="none" stroke="#fff" stroke-width="1.4" stroke-linejoin="round"/></svg>
<div class="a" style="left:1285px;top:1056.8px;font-size:15px;color:#ffffff;letter-spacing:0.3px;">Comments</div>
<div class="a" style="left:1388px;top:1047px;width:60px;height:32px;background:#5f5f5f;"></div>
<svg style="left:1407px;top:1054px;" width="22" height="18" viewBox="0 0 22 18"><rect x="0.7" y="0.7" width="20.6" height="16.6" fill="none" stroke="#fff" stroke-width="1.4"/><path d="M4 1 V17" stroke="#fff" stroke-width="1.3"/><rect x="8" y="4" width="10" height="5" fill="none" stroke="#fff" stroke-width="1.3"/><path d="M4 13.5 H21" stroke="#fff" stroke-width="1.2"/></svg>
<svg style="left:1467px;top:1054px;" width="22" height="18" viewBox="0 0 22 18"><rect x="0.7" y="0.7" width="8.5" height="6.5" fill="none" stroke="#fff" stroke-width="1.4"/><rect x="12.7" y="0.7" width="8.5" height="6.5" fill="none" stroke="#fff" stroke-width="1.4"/><rect x="0.7" y="10.7" width="8.5" height="6.5" fill="none" stroke="#fff" stroke-width="1.4"/><rect x="12.7" y="10.7" width="8.5" height="6.5" fill="none" stroke="#fff" stroke-width="1.4"/></svg>
<svg style="left:1527px;top:1053px;" width="21" height="18" viewBox="0 0 21 18"><path d="M0.7 2 H7 C8.5 2 10 3 10.5 4 C11 3 12.5 2 14 2 H20.3 V17 H0.7Z M10.5 4 V17" fill="none" stroke="#fff" stroke-width="1.3"/><path d="M3 6 H8 M3 9 H8 M3 12 H8 M13 6 H18 M13 9 H18 M13 12 H18" stroke="#fff" stroke-width="1.1"/></svg>
<svg style="left:1587px;top:1053px;" width="21" height="19" viewBox="0 0 21 19"><path d="M0.7 1 H20.3" stroke="#fff" stroke-width="1.4"/><rect x="2.7" y="2" width="15.6" height="9" fill="none" stroke="#fff" stroke-width="1.3"/><path d="M10.5 11 V18 M5 18 H16" stroke="#fff" stroke-width="1.4"/><path d="M6 6 H14" stroke="#fff" stroke-width="1.2"/></svg>
<div class="a" style="left:1636px;top:1063px;width:11px;height:1.3px;background:#dcdcdc;"></div>
<div class="a" style="left:1656px;top:1062.5px;width:148px;height:2px;background:#bdbdbd;"></div>
<div class="a" style="left:1698px;top:1054px;width:9px;height:18px;background:#c9c9c9;border-radius:1px"></div>
<div class="a" style="left:1728px;top:1059px;width:1.3px;height:9px;background:#bdbdbd;"></div>
<svg style="left:1811px;top:1057px;" width="13" height="13" viewBox="0 0 13 13"><path d="M6.5 0 V13 M0 6.5 H13" stroke="#fff" stroke-width="1.3"/></svg>
<div class="a" style="left:1841px;top:1056.2px;font-size:15px;color:#ffffff;letter-spacing:0.2px;">65%</div>
<svg style="left:1891px;top:1051px;" width="23" height="23" viewBox="0 0 23 23"><rect x="7" y="7" width="9" height="9" fill="none" stroke="#fff" stroke-width="1.4"/><path d="M8.5 3.5 L11.5 0.8 L14.5 3.5 M8.5 19.5 L11.5 22.2 L14.5 19.5 M3.5 8.5 L0.8 11.5 L3.5 14.5 M19.5 8.5 L22.2 11.5 L19.5 14.5" fill="none" stroke="#fff" stroke-width="1.3"/></svg>
</body></html>
